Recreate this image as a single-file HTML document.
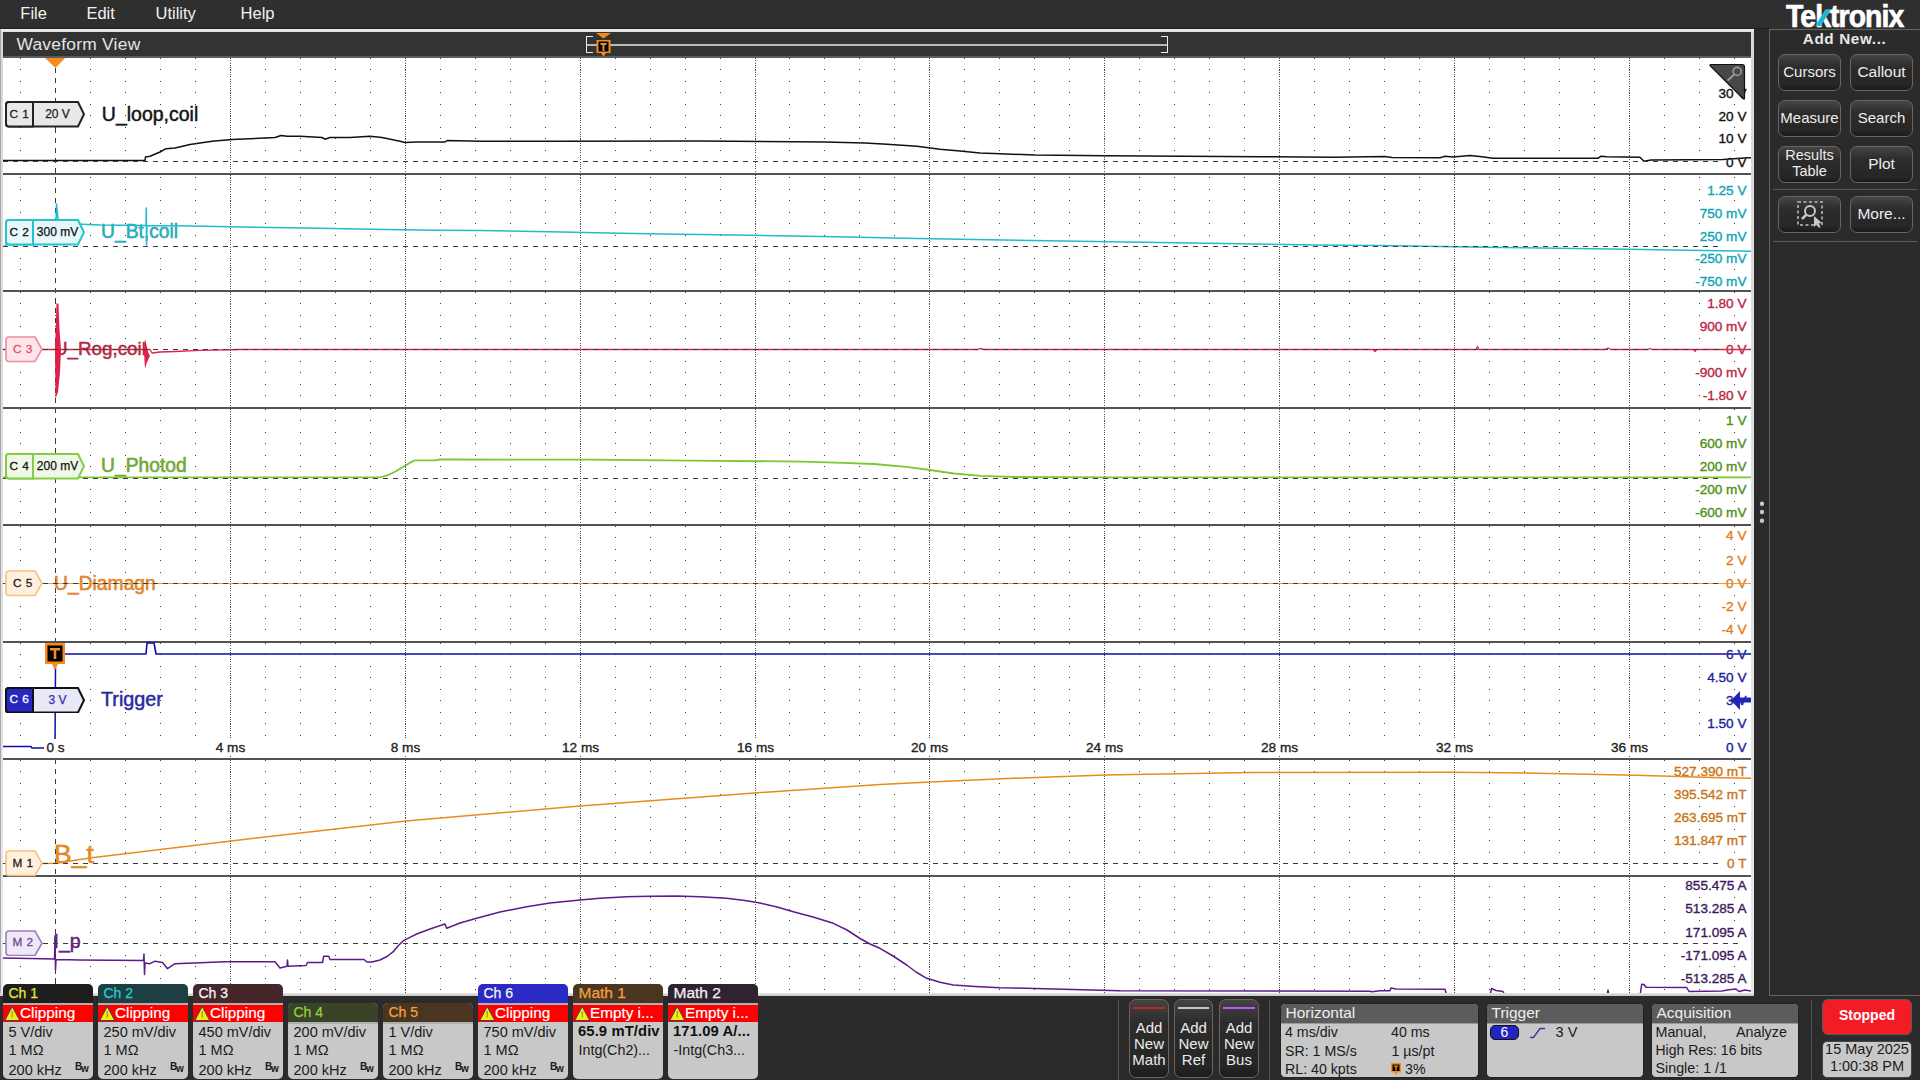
<!DOCTYPE html><html><head><meta charset="utf-8"><style>html,body{margin:0;padding:0;width:1920px;height:1080px;overflow:hidden;background:#2b2b2b;}body{position:relative;font-family:"Liberation Sans", sans-serif;}.t{position:absolute;white-space:nowrap;line-height:1;font-family:"Liberation Sans",sans-serif;}</style></head><body>
<div style="position:absolute;left:0px;top:0px;width:1920px;height:29px;background:#2f2f2f"></div>
<div style="position:absolute;left:0px;top:28px;width:1770px;height:1px;background:#1c1c1c"></div>
<div class="t" style="left:20.3px;top:5.2px;font-size:16.5px;color:#f2f2f2;font-weight:normal;">File</div>
<div class="t" style="left:86.4px;top:5.2px;font-size:16.5px;color:#f2f2f2;font-weight:normal;">Edit</div>
<div class="t" style="left:155.5px;top:5.2px;font-size:16.5px;color:#f2f2f2;font-weight:normal;">Utility</div>
<div class="t" style="left:240.6px;top:5.2px;font-size:16.5px;color:#f2f2f2;font-weight:normal;">Help</div>
<div style="position:absolute;left:0px;top:29px;width:1754px;height:967px;background:linear-gradient(#f2f2f2,#d8d8d8 4px,#e8e8e8);"></div>
<div style="position:absolute;left:0px;top:29px;width:1px;height:967px;background:#a8a8a8"></div>
<div style="position:absolute;left:3px;top:32px;width:1748px;height:24px;background:#333333"></div>
<div style="position:absolute;left:3px;top:56px;width:1748px;height:2px;background:#585d62"></div>
<div class="t" style="left:16.4px;top:35.9px;font-size:17.4px;color:#e4e4e4;font-weight:normal;letter-spacing:0.25px">Waveform View</div>
<div style="position:absolute;left:587px;top:44px;width:580px;height:2px;background:#b9b9b9"></div>
<div style="position:absolute;left:586px;top:36px;width:1px;height:17px;background:#ececec"></div>
<div style="position:absolute;left:586px;top:36px;width:7px;height:1px;background:#ececec"></div>
<div style="position:absolute;left:586px;top:52px;width:7px;height:1px;background:#ececec"></div>
<div style="position:absolute;left:1167px;top:36px;width:1px;height:17px;background:#ececec"></div>
<div style="position:absolute;left:1161px;top:36px;width:7px;height:1px;background:#ececec"></div>
<div style="position:absolute;left:1161px;top:52px;width:7px;height:1px;background:#ececec"></div>
<svg style="position:absolute;left:0;top:0" width="1920" height="60"><path d="M596 33 L611 33 L603.5 38.5 Z" fill="#f58a1f"/><path d="M596.5 40 h14 v13 h-4.5 l-2.5 3.5 l-2.5 -3.5 h-4.5 Z" fill="#f58a1f"/><rect x="598.5" y="41.5" width="10" height="10" fill="#000"/><path d="M600.5 43 h6 v2 h-2 v6 h-2 v-6 h-2 Z" fill="#f58a1f"/></svg>
<div style="position:absolute;left:3px;top:58px;width:1748px;height:935px;background:#ffffff"></div>
<div style="position:absolute;left:1754px;top:29px;width:166px;height:1051px;background:#2b2b2b"></div>
<div style="position:absolute;left:1769px;top:29px;width:151px;height:967px;border-left:1px solid #6a635c;border-top:1px solid #6a635c;border-bottom:1px solid #6a635c;box-sizing:border-box;"></div>
<svg style="position:absolute;left:1755px;top:498px" width="14" height="30"><circle cx="7" cy="5.8" r="2.2" fill="#c8c8c8"/><circle cx="7" cy="14" r="2.2" fill="#c8c8c8"/><circle cx="7" cy="22.7" r="2.2" fill="#c8c8c8"/></svg>
<div class="t" style="left:1786px;top:1.0px;font-size:31px;font-weight:bold;color:#fff;-webkit-text-stroke:0.7px #fff;letter-spacing:-1px;transform:scaleX(0.915);transform-origin:0 0">Tektronix</div>
<svg style="position:absolute;left:0;top:0" width="1920" height="30"><path d="M1815.2 26 L1820.8 26 L1830.9 9.4 L1825.2 9.4 Z" fill="#1fb5d8"/></svg>
<div class="t" style="left:1744.6px;width:200px;text-align:center;top:31.2px;font-size:15.3px;color:#e8e8e8;font-weight:bold;letter-spacing:0.6px">Add New...</div>
<div style="position:absolute;left:1778px;top:54px;width:63px;height:37px;border:1px solid #6e6459;border-radius:7px;box-sizing:border-box;background:linear-gradient(#454545,#2c2c2c 35%,#262626 85%,#1a1a1a)"></div>
<div style="position:absolute;left:1850px;top:54px;width:63px;height:37px;border:1px solid #6e6459;border-radius:7px;box-sizing:border-box;background:linear-gradient(#454545,#2c2c2c 35%,#262626 85%,#1a1a1a)"></div>
<div style="position:absolute;left:1778px;top:100px;width:63px;height:37px;border:1px solid #6e6459;border-radius:7px;box-sizing:border-box;background:linear-gradient(#454545,#2c2c2c 35%,#262626 85%,#1a1a1a)"></div>
<div style="position:absolute;left:1850px;top:100px;width:63px;height:37px;border:1px solid #6e6459;border-radius:7px;box-sizing:border-box;background:linear-gradient(#454545,#2c2c2c 35%,#262626 85%,#1a1a1a)"></div>
<div style="position:absolute;left:1778px;top:146px;width:63px;height:37px;border:1px solid #6e6459;border-radius:7px;box-sizing:border-box;background:linear-gradient(#454545,#2c2c2c 35%,#262626 85%,#1a1a1a)"></div>
<div style="position:absolute;left:1850px;top:146px;width:63px;height:37px;border:1px solid #6e6459;border-radius:7px;box-sizing:border-box;background:linear-gradient(#454545,#2c2c2c 35%,#262626 85%,#1a1a1a)"></div>
<div style="position:absolute;left:1778px;top:196px;width:63px;height:37px;border:1px solid #6e6459;border-radius:7px;box-sizing:border-box;background:linear-gradient(#454545,#2c2c2c 35%,#262626 85%,#1a1a1a)"></div>
<div style="position:absolute;left:1850px;top:196px;width:63px;height:37px;border:1px solid #6e6459;border-radius:7px;box-sizing:border-box;background:linear-gradient(#454545,#2c2c2c 35%,#262626 85%,#1a1a1a)"></div>
<div class="t" style="left:1709.5px;width:200px;text-align:center;top:64.3px;font-size:15px;color:#ededed;font-weight:normal;">Cursors</div>
<div class="t" style="left:1781.5px;width:200px;text-align:center;top:63.9px;font-size:15.5px;color:#ededed;font-weight:normal;">Callout</div>
<div class="t" style="left:1709.5px;width:200px;text-align:center;top:110.3px;font-size:15px;color:#ededed;font-weight:normal;">Measure</div>
<div class="t" style="left:1781.5px;width:200px;text-align:center;top:110.3px;font-size:15px;color:#ededed;font-weight:normal;">Search</div>
<div class="t" style="left:1709.5px;width:200px;text-align:center;top:147.7px;font-size:14.5px;color:#ededed;font-weight:normal;">Results</div>
<div class="t" style="left:1709.5px;width:200px;text-align:center;top:164.0px;font-size:14.5px;color:#ededed;font-weight:normal;">Table</div>
<div class="t" style="left:1781.5px;width:200px;text-align:center;top:155.7px;font-size:15.5px;color:#ededed;font-weight:normal;">Plot</div>
<div class="t" style="left:1781.5px;width:200px;text-align:center;top:205.7px;font-size:15.5px;color:#ededed;font-weight:normal;">More...</div>
<div style="position:absolute;left:1773px;top:189px;width:144px;height:1px;background:#5e5850"></div>
<div style="position:absolute;left:1773px;top:241px;width:144px;height:1px;background:#5e5850"></div>
<svg style="position:absolute;left:1795px;top:199px" width="32" height="30"><rect x="3" y="3" width="24" height="23" fill="none" stroke="#9a9a9a" stroke-width="2" stroke-dasharray="3 2.5"/><circle cx="15" cy="12" r="5" fill="none" stroke="#c8c8c8" stroke-width="2"/><path d="M11.5 15.5 L7 20" stroke="#c8c8c8" stroke-width="2.5"/><path d="M19 17 L19 28 L21.5 25.5 L24 29 L25.5 28 L23.5 24.5 L27 24 Z" fill="#c8c8c8"/></svg>
<svg style="position:absolute;left:0;top:0" width="1920" height="1080">
<path d="M20 58.5h1M55 58.5h1M90 58.5h1M125 58.5h1M160 58.5h1M195 58.5h1M230 58.5h1M265 58.5h1M300 58.5h1M335 58.5h1M370 58.5h1M405 58.5h1M440 58.5h1M475 58.5h1M510 58.5h1M545 58.5h1M580 58.5h1M615 58.5h1M650 58.5h1M685 58.5h1M720 58.5h1M755 58.5h1M789 58.5h1M824 58.5h1M859 58.5h1M894 58.5h1M929 58.5h1M964 58.5h1M999 58.5h1M1034 58.5h1M1069 58.5h1M1104 58.5h1M1139 58.5h1M1174 58.5h1M1209 58.5h1M1244 58.5h1M1279 58.5h1M1314 58.5h1M1349 58.5h1M1384 58.5h1M1419 58.5h1M1454 58.5h1M1489 58.5h1M1524 58.5h1M1559 58.5h1M1594 58.5h1M1629 58.5h1M1664 58.5h1M1699 58.5h1M1734 58.5h1M20 69.5h1M55 69.5h1M90 69.5h1M125 69.5h1M160 69.5h1M195 69.5h1M230 69.5h1M265 69.5h1M300 69.5h1M335 69.5h1M370 69.5h1M405 69.5h1M440 69.5h1M475 69.5h1M510 69.5h1M545 69.5h1M580 69.5h1M615 69.5h1M650 69.5h1M685 69.5h1M720 69.5h1M755 69.5h1M789 69.5h1M824 69.5h1M859 69.5h1M894 69.5h1M929 69.5h1M964 69.5h1M999 69.5h1M1034 69.5h1M1069 69.5h1M1104 69.5h1M1139 69.5h1M1174 69.5h1M1209 69.5h1M1244 69.5h1M1279 69.5h1M1314 69.5h1M1349 69.5h1M1384 69.5h1M1419 69.5h1M1454 69.5h1M1489 69.5h1M1524 69.5h1M1559 69.5h1M1594 69.5h1M1629 69.5h1M1664 69.5h1M1699 69.5h1M1734 69.5h1M20 81.5h1M55 81.5h1M90 81.5h1M125 81.5h1M160 81.5h1M195 81.5h1M230 81.5h1M265 81.5h1M300 81.5h1M335 81.5h1M370 81.5h1M405 81.5h1M440 81.5h1M475 81.5h1M510 81.5h1M545 81.5h1M580 81.5h1M615 81.5h1M650 81.5h1M685 81.5h1M720 81.5h1M755 81.5h1M789 81.5h1M824 81.5h1M859 81.5h1M894 81.5h1M929 81.5h1M964 81.5h1M999 81.5h1M1034 81.5h1M1069 81.5h1M1104 81.5h1M1139 81.5h1M1174 81.5h1M1209 81.5h1M1244 81.5h1M1279 81.5h1M1314 81.5h1M1349 81.5h1M1384 81.5h1M1419 81.5h1M1454 81.5h1M1489 81.5h1M1524 81.5h1M1559 81.5h1M1594 81.5h1M1629 81.5h1M1664 81.5h1M1699 81.5h1M1734 81.5h1M20 92.5h1M55 92.5h1M90 92.5h1M125 92.5h1M160 92.5h1M195 92.5h1M230 92.5h1M265 92.5h1M300 92.5h1M335 92.5h1M370 92.5h1M405 92.5h1M440 92.5h1M475 92.5h1M510 92.5h1M545 92.5h1M580 92.5h1M615 92.5h1M650 92.5h1M685 92.5h1M720 92.5h1M755 92.5h1M789 92.5h1M824 92.5h1M859 92.5h1M894 92.5h1M929 92.5h1M964 92.5h1M999 92.5h1M1034 92.5h1M1069 92.5h1M1104 92.5h1M1139 92.5h1M1174 92.5h1M1209 92.5h1M1244 92.5h1M1279 92.5h1M1314 92.5h1M1349 92.5h1M1384 92.5h1M1419 92.5h1M1454 92.5h1M1489 92.5h1M1524 92.5h1M1559 92.5h1M1594 92.5h1M1629 92.5h1M1664 92.5h1M1699 92.5h1M20 104.5h1M55 104.5h1M90 104.5h1M125 104.5h1M160 104.5h1M195 104.5h1M230 104.5h1M265 104.5h1M300 104.5h1M335 104.5h1M370 104.5h1M405 104.5h1M440 104.5h1M475 104.5h1M510 104.5h1M545 104.5h1M580 104.5h1M615 104.5h1M650 104.5h1M685 104.5h1M720 104.5h1M755 104.5h1M789 104.5h1M824 104.5h1M859 104.5h1M894 104.5h1M929 104.5h1M964 104.5h1M999 104.5h1M1034 104.5h1M1069 104.5h1M1104 104.5h1M1139 104.5h1M1174 104.5h1M1209 104.5h1M1244 104.5h1M1279 104.5h1M1314 104.5h1M1349 104.5h1M1384 104.5h1M1419 104.5h1M1454 104.5h1M1489 104.5h1M1524 104.5h1M1559 104.5h1M1594 104.5h1M1629 104.5h1M1664 104.5h1M1699 104.5h1M1734 104.5h1M20 115.5h1M55 115.5h1M90 115.5h1M125 115.5h1M160 115.5h1M195 115.5h1M230 115.5h1M265 115.5h1M300 115.5h1M335 115.5h1M370 115.5h1M405 115.5h1M440 115.5h1M475 115.5h1M510 115.5h1M545 115.5h1M580 115.5h1M615 115.5h1M650 115.5h1M685 115.5h1M720 115.5h1M755 115.5h1M789 115.5h1M824 115.5h1M859 115.5h1M894 115.5h1M929 115.5h1M964 115.5h1M999 115.5h1M1034 115.5h1M1069 115.5h1M1104 115.5h1M1139 115.5h1M1174 115.5h1M1209 115.5h1M1244 115.5h1M1279 115.5h1M1314 115.5h1M1349 115.5h1M1384 115.5h1M1419 115.5h1M1454 115.5h1M1489 115.5h1M1524 115.5h1M1559 115.5h1M1594 115.5h1M1629 115.5h1M1664 115.5h1M1699 115.5h1M20 127.5h1M55 127.5h1M90 127.5h1M125 127.5h1M160 127.5h1M195 127.5h1M230 127.5h1M265 127.5h1M300 127.5h1M335 127.5h1M370 127.5h1M405 127.5h1M440 127.5h1M475 127.5h1M510 127.5h1M545 127.5h1M580 127.5h1M615 127.5h1M650 127.5h1M685 127.5h1M720 127.5h1M755 127.5h1M789 127.5h1M824 127.5h1M859 127.5h1M894 127.5h1M929 127.5h1M964 127.5h1M999 127.5h1M1034 127.5h1M1069 127.5h1M1104 127.5h1M1139 127.5h1M1174 127.5h1M1209 127.5h1M1244 127.5h1M1279 127.5h1M1314 127.5h1M1349 127.5h1M1384 127.5h1M1419 127.5h1M1454 127.5h1M1489 127.5h1M1524 127.5h1M1559 127.5h1M1594 127.5h1M1629 127.5h1M1664 127.5h1M1699 127.5h1M1734 127.5h1M20 138.5h1M55 138.5h1M90 138.5h1M125 138.5h1M160 138.5h1M195 138.5h1M230 138.5h1M265 138.5h1M300 138.5h1M335 138.5h1M370 138.5h1M405 138.5h1M440 138.5h1M475 138.5h1M510 138.5h1M545 138.5h1M580 138.5h1M615 138.5h1M650 138.5h1M685 138.5h1M720 138.5h1M755 138.5h1M789 138.5h1M824 138.5h1M859 138.5h1M894 138.5h1M929 138.5h1M964 138.5h1M999 138.5h1M1034 138.5h1M1069 138.5h1M1104 138.5h1M1139 138.5h1M1174 138.5h1M1209 138.5h1M1244 138.5h1M1279 138.5h1M1314 138.5h1M1349 138.5h1M1384 138.5h1M1419 138.5h1M1454 138.5h1M1489 138.5h1M1524 138.5h1M1559 138.5h1M1594 138.5h1M1629 138.5h1M1664 138.5h1M1699 138.5h1M20 150.5h1M55 150.5h1M90 150.5h1M125 150.5h1M160 150.5h1M195 150.5h1M230 150.5h1M265 150.5h1M300 150.5h1M335 150.5h1M370 150.5h1M405 150.5h1M440 150.5h1M475 150.5h1M510 150.5h1M545 150.5h1M580 150.5h1M615 150.5h1M650 150.5h1M685 150.5h1M720 150.5h1M755 150.5h1M789 150.5h1M824 150.5h1M859 150.5h1M894 150.5h1M929 150.5h1M964 150.5h1M999 150.5h1M1034 150.5h1M1069 150.5h1M1104 150.5h1M1139 150.5h1M1174 150.5h1M1209 150.5h1M1244 150.5h1M1279 150.5h1M1314 150.5h1M1349 150.5h1M1384 150.5h1M1419 150.5h1M1454 150.5h1M1489 150.5h1M1524 150.5h1M1559 150.5h1M1594 150.5h1M1629 150.5h1M1664 150.5h1M1699 150.5h1M1734 150.5h1M20 177.5h1M55 177.5h1M90 177.5h1M125 177.5h1M160 177.5h1M195 177.5h1M230 177.5h1M265 177.5h1M300 177.5h1M335 177.5h1M370 177.5h1M405 177.5h1M440 177.5h1M475 177.5h1M510 177.5h1M545 177.5h1M580 177.5h1M615 177.5h1M650 177.5h1M685 177.5h1M720 177.5h1M755 177.5h1M789 177.5h1M824 177.5h1M859 177.5h1M894 177.5h1M929 177.5h1M964 177.5h1M999 177.5h1M1034 177.5h1M1069 177.5h1M1104 177.5h1M1139 177.5h1M1174 177.5h1M1209 177.5h1M1244 177.5h1M1279 177.5h1M1314 177.5h1M1349 177.5h1M1384 177.5h1M1419 177.5h1M1454 177.5h1M1489 177.5h1M1524 177.5h1M1559 177.5h1M1594 177.5h1M1629 177.5h1M1664 177.5h1M1699 177.5h1M1734 177.5h1M20 189.5h1M55 189.5h1M90 189.5h1M125 189.5h1M160 189.5h1M195 189.5h1M230 189.5h1M265 189.5h1M300 189.5h1M335 189.5h1M370 189.5h1M405 189.5h1M440 189.5h1M475 189.5h1M510 189.5h1M545 189.5h1M580 189.5h1M615 189.5h1M650 189.5h1M685 189.5h1M720 189.5h1M755 189.5h1M789 189.5h1M824 189.5h1M859 189.5h1M894 189.5h1M929 189.5h1M964 189.5h1M999 189.5h1M1034 189.5h1M1069 189.5h1M1104 189.5h1M1139 189.5h1M1174 189.5h1M1209 189.5h1M1244 189.5h1M1279 189.5h1M1314 189.5h1M1349 189.5h1M1384 189.5h1M1419 189.5h1M1454 189.5h1M1489 189.5h1M1524 189.5h1M1559 189.5h1M1594 189.5h1M1629 189.5h1M1664 189.5h1M1699 189.5h1M20 200.5h1M55 200.5h1M90 200.5h1M125 200.5h1M160 200.5h1M195 200.5h1M230 200.5h1M265 200.5h1M300 200.5h1M335 200.5h1M370 200.5h1M405 200.5h1M440 200.5h1M475 200.5h1M510 200.5h1M545 200.5h1M580 200.5h1M615 200.5h1M650 200.5h1M685 200.5h1M720 200.5h1M755 200.5h1M789 200.5h1M824 200.5h1M859 200.5h1M894 200.5h1M929 200.5h1M964 200.5h1M999 200.5h1M1034 200.5h1M1069 200.5h1M1104 200.5h1M1139 200.5h1M1174 200.5h1M1209 200.5h1M1244 200.5h1M1279 200.5h1M1314 200.5h1M1349 200.5h1M1384 200.5h1M1419 200.5h1M1454 200.5h1M1489 200.5h1M1524 200.5h1M1559 200.5h1M1594 200.5h1M1629 200.5h1M1664 200.5h1M1699 200.5h1M1734 200.5h1M20 212.5h1M55 212.5h1M90 212.5h1M125 212.5h1M160 212.5h1M195 212.5h1M230 212.5h1M265 212.5h1M300 212.5h1M335 212.5h1M370 212.5h1M405 212.5h1M440 212.5h1M475 212.5h1M510 212.5h1M545 212.5h1M580 212.5h1M615 212.5h1M650 212.5h1M685 212.5h1M720 212.5h1M755 212.5h1M789 212.5h1M824 212.5h1M859 212.5h1M894 212.5h1M929 212.5h1M964 212.5h1M999 212.5h1M1034 212.5h1M1069 212.5h1M1104 212.5h1M1139 212.5h1M1174 212.5h1M1209 212.5h1M1244 212.5h1M1279 212.5h1M1314 212.5h1M1349 212.5h1M1384 212.5h1M1419 212.5h1M1454 212.5h1M1489 212.5h1M1524 212.5h1M1559 212.5h1M1594 212.5h1M1629 212.5h1M1664 212.5h1M20 223.5h1M55 223.5h1M90 223.5h1M125 223.5h1M160 223.5h1M195 223.5h1M230 223.5h1M265 223.5h1M300 223.5h1M335 223.5h1M370 223.5h1M405 223.5h1M440 223.5h1M475 223.5h1M510 223.5h1M545 223.5h1M580 223.5h1M615 223.5h1M650 223.5h1M685 223.5h1M720 223.5h1M755 223.5h1M789 223.5h1M824 223.5h1M859 223.5h1M894 223.5h1M929 223.5h1M964 223.5h1M999 223.5h1M1034 223.5h1M1069 223.5h1M1104 223.5h1M1139 223.5h1M1174 223.5h1M1209 223.5h1M1244 223.5h1M1279 223.5h1M1314 223.5h1M1349 223.5h1M1384 223.5h1M1419 223.5h1M1454 223.5h1M1489 223.5h1M1524 223.5h1M1559 223.5h1M1594 223.5h1M1629 223.5h1M1664 223.5h1M1699 223.5h1M1734 223.5h1M20 235.5h1M55 235.5h1M90 235.5h1M125 235.5h1M160 235.5h1M195 235.5h1M230 235.5h1M265 235.5h1M300 235.5h1M335 235.5h1M370 235.5h1M405 235.5h1M440 235.5h1M475 235.5h1M510 235.5h1M545 235.5h1M580 235.5h1M615 235.5h1M650 235.5h1M685 235.5h1M720 235.5h1M755 235.5h1M789 235.5h1M824 235.5h1M859 235.5h1M894 235.5h1M929 235.5h1M964 235.5h1M999 235.5h1M1034 235.5h1M1069 235.5h1M1104 235.5h1M1139 235.5h1M1174 235.5h1M1209 235.5h1M1244 235.5h1M1279 235.5h1M1314 235.5h1M1349 235.5h1M1384 235.5h1M1419 235.5h1M1454 235.5h1M1489 235.5h1M1524 235.5h1M1559 235.5h1M1594 235.5h1M1629 235.5h1M1664 235.5h1M20 258.5h1M55 258.5h1M90 258.5h1M125 258.5h1M160 258.5h1M195 258.5h1M230 258.5h1M265 258.5h1M300 258.5h1M335 258.5h1M370 258.5h1M405 258.5h1M440 258.5h1M475 258.5h1M510 258.5h1M545 258.5h1M580 258.5h1M615 258.5h1M650 258.5h1M685 258.5h1M720 258.5h1M755 258.5h1M789 258.5h1M824 258.5h1M859 258.5h1M894 258.5h1M929 258.5h1M964 258.5h1M999 258.5h1M1034 258.5h1M1069 258.5h1M1104 258.5h1M1139 258.5h1M1174 258.5h1M1209 258.5h1M1244 258.5h1M1279 258.5h1M1314 258.5h1M1349 258.5h1M1384 258.5h1M1419 258.5h1M1454 258.5h1M1489 258.5h1M1524 258.5h1M1559 258.5h1M1594 258.5h1M1629 258.5h1M1664 258.5h1M20 269.5h1M55 269.5h1M90 269.5h1M125 269.5h1M160 269.5h1M195 269.5h1M230 269.5h1M265 269.5h1M300 269.5h1M335 269.5h1M370 269.5h1M405 269.5h1M440 269.5h1M475 269.5h1M510 269.5h1M545 269.5h1M580 269.5h1M615 269.5h1M650 269.5h1M685 269.5h1M720 269.5h1M755 269.5h1M789 269.5h1M824 269.5h1M859 269.5h1M894 269.5h1M929 269.5h1M964 269.5h1M999 269.5h1M1034 269.5h1M1069 269.5h1M1104 269.5h1M1139 269.5h1M1174 269.5h1M1209 269.5h1M1244 269.5h1M1279 269.5h1M1314 269.5h1M1349 269.5h1M1384 269.5h1M1419 269.5h1M1454 269.5h1M1489 269.5h1M1524 269.5h1M1559 269.5h1M1594 269.5h1M1629 269.5h1M1664 269.5h1M1699 269.5h1M1734 269.5h1M20 281.5h1M55 281.5h1M90 281.5h1M125 281.5h1M160 281.5h1M195 281.5h1M230 281.5h1M265 281.5h1M300 281.5h1M335 281.5h1M370 281.5h1M405 281.5h1M440 281.5h1M475 281.5h1M510 281.5h1M545 281.5h1M580 281.5h1M615 281.5h1M650 281.5h1M685 281.5h1M720 281.5h1M755 281.5h1M789 281.5h1M824 281.5h1M859 281.5h1M894 281.5h1M929 281.5h1M964 281.5h1M999 281.5h1M1034 281.5h1M1069 281.5h1M1104 281.5h1M1139 281.5h1M1174 281.5h1M1209 281.5h1M1244 281.5h1M1279 281.5h1M1314 281.5h1M1349 281.5h1M1384 281.5h1M1419 281.5h1M1454 281.5h1M1489 281.5h1M1524 281.5h1M1559 281.5h1M1594 281.5h1M1629 281.5h1M1664 281.5h1M20 292.5h1M55 292.5h1M90 292.5h1M125 292.5h1M160 292.5h1M195 292.5h1M230 292.5h1M265 292.5h1M300 292.5h1M335 292.5h1M370 292.5h1M405 292.5h1M440 292.5h1M475 292.5h1M510 292.5h1M545 292.5h1M580 292.5h1M615 292.5h1M650 292.5h1M685 292.5h1M720 292.5h1M755 292.5h1M789 292.5h1M824 292.5h1M859 292.5h1M894 292.5h1M929 292.5h1M964 292.5h1M999 292.5h1M1034 292.5h1M1069 292.5h1M1104 292.5h1M1139 292.5h1M1174 292.5h1M1209 292.5h1M1244 292.5h1M1279 292.5h1M1314 292.5h1M1349 292.5h1M1384 292.5h1M1419 292.5h1M1454 292.5h1M1489 292.5h1M1524 292.5h1M1559 292.5h1M1594 292.5h1M1629 292.5h1M1664 292.5h1M1699 292.5h1M1734 292.5h1M20 303.5h1M55 303.5h1M90 303.5h1M125 303.5h1M160 303.5h1M195 303.5h1M230 303.5h1M265 303.5h1M300 303.5h1M335 303.5h1M370 303.5h1M405 303.5h1M440 303.5h1M475 303.5h1M510 303.5h1M545 303.5h1M580 303.5h1M615 303.5h1M650 303.5h1M685 303.5h1M720 303.5h1M755 303.5h1M789 303.5h1M824 303.5h1M859 303.5h1M894 303.5h1M929 303.5h1M964 303.5h1M999 303.5h1M1034 303.5h1M1069 303.5h1M1104 303.5h1M1139 303.5h1M1174 303.5h1M1209 303.5h1M1244 303.5h1M1279 303.5h1M1314 303.5h1M1349 303.5h1M1384 303.5h1M1419 303.5h1M1454 303.5h1M1489 303.5h1M1524 303.5h1M1559 303.5h1M1594 303.5h1M1629 303.5h1M1664 303.5h1M1699 303.5h1M20 315.5h1M55 315.5h1M90 315.5h1M125 315.5h1M160 315.5h1M195 315.5h1M230 315.5h1M265 315.5h1M300 315.5h1M335 315.5h1M370 315.5h1M405 315.5h1M440 315.5h1M475 315.5h1M510 315.5h1M545 315.5h1M580 315.5h1M615 315.5h1M650 315.5h1M685 315.5h1M720 315.5h1M755 315.5h1M789 315.5h1M824 315.5h1M859 315.5h1M894 315.5h1M929 315.5h1M964 315.5h1M999 315.5h1M1034 315.5h1M1069 315.5h1M1104 315.5h1M1139 315.5h1M1174 315.5h1M1209 315.5h1M1244 315.5h1M1279 315.5h1M1314 315.5h1M1349 315.5h1M1384 315.5h1M1419 315.5h1M1454 315.5h1M1489 315.5h1M1524 315.5h1M1559 315.5h1M1594 315.5h1M1629 315.5h1M1664 315.5h1M1699 315.5h1M1734 315.5h1M20 326.5h1M55 326.5h1M90 326.5h1M125 326.5h1M160 326.5h1M195 326.5h1M230 326.5h1M265 326.5h1M300 326.5h1M335 326.5h1M370 326.5h1M405 326.5h1M440 326.5h1M475 326.5h1M510 326.5h1M545 326.5h1M580 326.5h1M615 326.5h1M650 326.5h1M685 326.5h1M720 326.5h1M755 326.5h1M789 326.5h1M824 326.5h1M859 326.5h1M894 326.5h1M929 326.5h1M964 326.5h1M999 326.5h1M1034 326.5h1M1069 326.5h1M1104 326.5h1M1139 326.5h1M1174 326.5h1M1209 326.5h1M1244 326.5h1M1279 326.5h1M1314 326.5h1M1349 326.5h1M1384 326.5h1M1419 326.5h1M1454 326.5h1M1489 326.5h1M1524 326.5h1M1559 326.5h1M1594 326.5h1M1629 326.5h1M1664 326.5h1M20 338.5h1M55 338.5h1M90 338.5h1M125 338.5h1M160 338.5h1M195 338.5h1M230 338.5h1M265 338.5h1M300 338.5h1M335 338.5h1M370 338.5h1M405 338.5h1M440 338.5h1M475 338.5h1M510 338.5h1M545 338.5h1M580 338.5h1M615 338.5h1M650 338.5h1M685 338.5h1M720 338.5h1M755 338.5h1M789 338.5h1M824 338.5h1M859 338.5h1M894 338.5h1M929 338.5h1M964 338.5h1M999 338.5h1M1034 338.5h1M1069 338.5h1M1104 338.5h1M1139 338.5h1M1174 338.5h1M1209 338.5h1M1244 338.5h1M1279 338.5h1M1314 338.5h1M1349 338.5h1M1384 338.5h1M1419 338.5h1M1454 338.5h1M1489 338.5h1M1524 338.5h1M1559 338.5h1M1594 338.5h1M1629 338.5h1M1664 338.5h1M1699 338.5h1M1734 338.5h1M20 361.5h1M55 361.5h1M90 361.5h1M125 361.5h1M160 361.5h1M195 361.5h1M230 361.5h1M265 361.5h1M300 361.5h1M335 361.5h1M370 361.5h1M405 361.5h1M440 361.5h1M475 361.5h1M510 361.5h1M545 361.5h1M580 361.5h1M615 361.5h1M650 361.5h1M685 361.5h1M720 361.5h1M755 361.5h1M789 361.5h1M824 361.5h1M859 361.5h1M894 361.5h1M929 361.5h1M964 361.5h1M999 361.5h1M1034 361.5h1M1069 361.5h1M1104 361.5h1M1139 361.5h1M1174 361.5h1M1209 361.5h1M1244 361.5h1M1279 361.5h1M1314 361.5h1M1349 361.5h1M1384 361.5h1M1419 361.5h1M1454 361.5h1M1489 361.5h1M1524 361.5h1M1559 361.5h1M1594 361.5h1M1629 361.5h1M1664 361.5h1M1699 361.5h1M1734 361.5h1M20 372.5h1M55 372.5h1M90 372.5h1M125 372.5h1M160 372.5h1M195 372.5h1M230 372.5h1M265 372.5h1M300 372.5h1M335 372.5h1M370 372.5h1M405 372.5h1M440 372.5h1M475 372.5h1M510 372.5h1M545 372.5h1M580 372.5h1M615 372.5h1M650 372.5h1M685 372.5h1M720 372.5h1M755 372.5h1M789 372.5h1M824 372.5h1M859 372.5h1M894 372.5h1M929 372.5h1M964 372.5h1M999 372.5h1M1034 372.5h1M1069 372.5h1M1104 372.5h1M1139 372.5h1M1174 372.5h1M1209 372.5h1M1244 372.5h1M1279 372.5h1M1314 372.5h1M1349 372.5h1M1384 372.5h1M1419 372.5h1M1454 372.5h1M1489 372.5h1M1524 372.5h1M1559 372.5h1M1594 372.5h1M1629 372.5h1M1664 372.5h1M20 384.5h1M55 384.5h1M90 384.5h1M125 384.5h1M160 384.5h1M195 384.5h1M230 384.5h1M265 384.5h1M300 384.5h1M335 384.5h1M370 384.5h1M405 384.5h1M440 384.5h1M475 384.5h1M510 384.5h1M545 384.5h1M580 384.5h1M615 384.5h1M650 384.5h1M685 384.5h1M720 384.5h1M755 384.5h1M789 384.5h1M824 384.5h1M859 384.5h1M894 384.5h1M929 384.5h1M964 384.5h1M999 384.5h1M1034 384.5h1M1069 384.5h1M1104 384.5h1M1139 384.5h1M1174 384.5h1M1209 384.5h1M1244 384.5h1M1279 384.5h1M1314 384.5h1M1349 384.5h1M1384 384.5h1M1419 384.5h1M1454 384.5h1M1489 384.5h1M1524 384.5h1M1559 384.5h1M1594 384.5h1M1629 384.5h1M1664 384.5h1M1699 384.5h1M1734 384.5h1M20 395.5h1M55 395.5h1M90 395.5h1M125 395.5h1M160 395.5h1M195 395.5h1M230 395.5h1M265 395.5h1M300 395.5h1M335 395.5h1M370 395.5h1M405 395.5h1M440 395.5h1M475 395.5h1M510 395.5h1M545 395.5h1M580 395.5h1M615 395.5h1M650 395.5h1M685 395.5h1M720 395.5h1M755 395.5h1M789 395.5h1M824 395.5h1M859 395.5h1M894 395.5h1M929 395.5h1M964 395.5h1M999 395.5h1M1034 395.5h1M1069 395.5h1M1104 395.5h1M1139 395.5h1M1174 395.5h1M1209 395.5h1M1244 395.5h1M1279 395.5h1M1314 395.5h1M1349 395.5h1M1384 395.5h1M1419 395.5h1M1454 395.5h1M1489 395.5h1M1524 395.5h1M1559 395.5h1M1594 395.5h1M1629 395.5h1M1664 395.5h1M1699 395.5h1M20 409.5h1M55 409.5h1M90 409.5h1M125 409.5h1M160 409.5h1M195 409.5h1M230 409.5h1M265 409.5h1M300 409.5h1M335 409.5h1M370 409.5h1M405 409.5h1M440 409.5h1M475 409.5h1M510 409.5h1M545 409.5h1M580 409.5h1M615 409.5h1M650 409.5h1M685 409.5h1M720 409.5h1M755 409.5h1M789 409.5h1M824 409.5h1M859 409.5h1M894 409.5h1M929 409.5h1M964 409.5h1M999 409.5h1M1034 409.5h1M1069 409.5h1M1104 409.5h1M1139 409.5h1M1174 409.5h1M1209 409.5h1M1244 409.5h1M1279 409.5h1M1314 409.5h1M1349 409.5h1M1384 409.5h1M1419 409.5h1M1454 409.5h1M1489 409.5h1M1524 409.5h1M1559 409.5h1M1594 409.5h1M1629 409.5h1M1664 409.5h1M1699 409.5h1M1734 409.5h1M20 420.5h1M55 420.5h1M90 420.5h1M125 420.5h1M160 420.5h1M195 420.5h1M230 420.5h1M265 420.5h1M300 420.5h1M335 420.5h1M370 420.5h1M405 420.5h1M440 420.5h1M475 420.5h1M510 420.5h1M545 420.5h1M580 420.5h1M615 420.5h1M650 420.5h1M685 420.5h1M720 420.5h1M755 420.5h1M789 420.5h1M824 420.5h1M859 420.5h1M894 420.5h1M929 420.5h1M964 420.5h1M999 420.5h1M1034 420.5h1M1069 420.5h1M1104 420.5h1M1139 420.5h1M1174 420.5h1M1209 420.5h1M1244 420.5h1M1279 420.5h1M1314 420.5h1M1349 420.5h1M1384 420.5h1M1419 420.5h1M1454 420.5h1M1489 420.5h1M1524 420.5h1M1559 420.5h1M1594 420.5h1M1629 420.5h1M1664 420.5h1M1699 420.5h1M20 432.5h1M55 432.5h1M90 432.5h1M125 432.5h1M160 432.5h1M195 432.5h1M230 432.5h1M265 432.5h1M300 432.5h1M335 432.5h1M370 432.5h1M405 432.5h1M440 432.5h1M475 432.5h1M510 432.5h1M545 432.5h1M580 432.5h1M615 432.5h1M650 432.5h1M685 432.5h1M720 432.5h1M755 432.5h1M789 432.5h1M824 432.5h1M859 432.5h1M894 432.5h1M929 432.5h1M964 432.5h1M999 432.5h1M1034 432.5h1M1069 432.5h1M1104 432.5h1M1139 432.5h1M1174 432.5h1M1209 432.5h1M1244 432.5h1M1279 432.5h1M1314 432.5h1M1349 432.5h1M1384 432.5h1M1419 432.5h1M1454 432.5h1M1489 432.5h1M1524 432.5h1M1559 432.5h1M1594 432.5h1M1629 432.5h1M1664 432.5h1M1699 432.5h1M1734 432.5h1M20 443.5h1M55 443.5h1M90 443.5h1M125 443.5h1M160 443.5h1M195 443.5h1M230 443.5h1M265 443.5h1M300 443.5h1M335 443.5h1M370 443.5h1M405 443.5h1M440 443.5h1M475 443.5h1M510 443.5h1M545 443.5h1M580 443.5h1M615 443.5h1M650 443.5h1M685 443.5h1M720 443.5h1M755 443.5h1M789 443.5h1M824 443.5h1M859 443.5h1M894 443.5h1M929 443.5h1M964 443.5h1M999 443.5h1M1034 443.5h1M1069 443.5h1M1104 443.5h1M1139 443.5h1M1174 443.5h1M1209 443.5h1M1244 443.5h1M1279 443.5h1M1314 443.5h1M1349 443.5h1M1384 443.5h1M1419 443.5h1M1454 443.5h1M1489 443.5h1M1524 443.5h1M1559 443.5h1M1594 443.5h1M1629 443.5h1M1664 443.5h1M20 455.5h1M55 455.5h1M90 455.5h1M125 455.5h1M160 455.5h1M195 455.5h1M230 455.5h1M265 455.5h1M300 455.5h1M335 455.5h1M370 455.5h1M405 455.5h1M440 455.5h1M475 455.5h1M510 455.5h1M545 455.5h1M580 455.5h1M615 455.5h1M650 455.5h1M685 455.5h1M720 455.5h1M755 455.5h1M789 455.5h1M824 455.5h1M859 455.5h1M894 455.5h1M929 455.5h1M964 455.5h1M999 455.5h1M1034 455.5h1M1069 455.5h1M1104 455.5h1M1139 455.5h1M1174 455.5h1M1209 455.5h1M1244 455.5h1M1279 455.5h1M1314 455.5h1M1349 455.5h1M1384 455.5h1M1419 455.5h1M1454 455.5h1M1489 455.5h1M1524 455.5h1M1559 455.5h1M1594 455.5h1M1629 455.5h1M1664 455.5h1M1699 455.5h1M1734 455.5h1M20 466.5h1M55 466.5h1M90 466.5h1M125 466.5h1M160 466.5h1M195 466.5h1M230 466.5h1M265 466.5h1M300 466.5h1M335 466.5h1M370 466.5h1M405 466.5h1M440 466.5h1M475 466.5h1M510 466.5h1M545 466.5h1M580 466.5h1M615 466.5h1M650 466.5h1M685 466.5h1M720 466.5h1M755 466.5h1M789 466.5h1M824 466.5h1M859 466.5h1M894 466.5h1M929 466.5h1M964 466.5h1M999 466.5h1M1034 466.5h1M1069 466.5h1M1104 466.5h1M1139 466.5h1M1174 466.5h1M1209 466.5h1M1244 466.5h1M1279 466.5h1M1314 466.5h1M1349 466.5h1M1384 466.5h1M1419 466.5h1M1454 466.5h1M1489 466.5h1M1524 466.5h1M1559 466.5h1M1594 466.5h1M1629 466.5h1M1664 466.5h1M20 489.5h1M55 489.5h1M90 489.5h1M125 489.5h1M160 489.5h1M195 489.5h1M230 489.5h1M265 489.5h1M300 489.5h1M335 489.5h1M370 489.5h1M405 489.5h1M440 489.5h1M475 489.5h1M510 489.5h1M545 489.5h1M580 489.5h1M615 489.5h1M650 489.5h1M685 489.5h1M720 489.5h1M755 489.5h1M789 489.5h1M824 489.5h1M859 489.5h1M894 489.5h1M929 489.5h1M964 489.5h1M999 489.5h1M1034 489.5h1M1069 489.5h1M1104 489.5h1M1139 489.5h1M1174 489.5h1M1209 489.5h1M1244 489.5h1M1279 489.5h1M1314 489.5h1M1349 489.5h1M1384 489.5h1M1419 489.5h1M1454 489.5h1M1489 489.5h1M1524 489.5h1M1559 489.5h1M1594 489.5h1M1629 489.5h1M1664 489.5h1M20 501.5h1M55 501.5h1M90 501.5h1M125 501.5h1M160 501.5h1M195 501.5h1M230 501.5h1M265 501.5h1M300 501.5h1M335 501.5h1M370 501.5h1M405 501.5h1M440 501.5h1M475 501.5h1M510 501.5h1M545 501.5h1M580 501.5h1M615 501.5h1M650 501.5h1M685 501.5h1M720 501.5h1M755 501.5h1M789 501.5h1M824 501.5h1M859 501.5h1M894 501.5h1M929 501.5h1M964 501.5h1M999 501.5h1M1034 501.5h1M1069 501.5h1M1104 501.5h1M1139 501.5h1M1174 501.5h1M1209 501.5h1M1244 501.5h1M1279 501.5h1M1314 501.5h1M1349 501.5h1M1384 501.5h1M1419 501.5h1M1454 501.5h1M1489 501.5h1M1524 501.5h1M1559 501.5h1M1594 501.5h1M1629 501.5h1M1664 501.5h1M1699 501.5h1M1734 501.5h1M20 512.5h1M55 512.5h1M90 512.5h1M125 512.5h1M160 512.5h1M195 512.5h1M230 512.5h1M265 512.5h1M300 512.5h1M335 512.5h1M370 512.5h1M405 512.5h1M440 512.5h1M475 512.5h1M510 512.5h1M545 512.5h1M580 512.5h1M615 512.5h1M650 512.5h1M685 512.5h1M720 512.5h1M755 512.5h1M789 512.5h1M824 512.5h1M859 512.5h1M894 512.5h1M929 512.5h1M964 512.5h1M999 512.5h1M1034 512.5h1M1069 512.5h1M1104 512.5h1M1139 512.5h1M1174 512.5h1M1209 512.5h1M1244 512.5h1M1279 512.5h1M1314 512.5h1M1349 512.5h1M1384 512.5h1M1419 512.5h1M1454 512.5h1M1489 512.5h1M1524 512.5h1M1559 512.5h1M1594 512.5h1M1629 512.5h1M1664 512.5h1M20 526.5h1M55 526.5h1M90 526.5h1M125 526.5h1M160 526.5h1M195 526.5h1M230 526.5h1M265 526.5h1M300 526.5h1M335 526.5h1M370 526.5h1M405 526.5h1M440 526.5h1M475 526.5h1M510 526.5h1M545 526.5h1M580 526.5h1M615 526.5h1M650 526.5h1M685 526.5h1M720 526.5h1M755 526.5h1M789 526.5h1M824 526.5h1M859 526.5h1M894 526.5h1M929 526.5h1M964 526.5h1M999 526.5h1M1034 526.5h1M1069 526.5h1M1104 526.5h1M1139 526.5h1M1174 526.5h1M1209 526.5h1M1244 526.5h1M1279 526.5h1M1314 526.5h1M1349 526.5h1M1384 526.5h1M1419 526.5h1M1454 526.5h1M1489 526.5h1M1524 526.5h1M1559 526.5h1M1594 526.5h1M1629 526.5h1M1664 526.5h1M1699 526.5h1M1734 526.5h1M20 537.5h1M55 537.5h1M90 537.5h1M125 537.5h1M160 537.5h1M195 537.5h1M230 537.5h1M265 537.5h1M300 537.5h1M335 537.5h1M370 537.5h1M405 537.5h1M440 537.5h1M475 537.5h1M510 537.5h1M545 537.5h1M580 537.5h1M615 537.5h1M650 537.5h1M685 537.5h1M720 537.5h1M755 537.5h1M789 537.5h1M824 537.5h1M859 537.5h1M894 537.5h1M929 537.5h1M964 537.5h1M999 537.5h1M1034 537.5h1M1069 537.5h1M1104 537.5h1M1139 537.5h1M1174 537.5h1M1209 537.5h1M1244 537.5h1M1279 537.5h1M1314 537.5h1M1349 537.5h1M1384 537.5h1M1419 537.5h1M1454 537.5h1M1489 537.5h1M1524 537.5h1M1559 537.5h1M1594 537.5h1M1629 537.5h1M1664 537.5h1M1699 537.5h1M20 549.5h1M55 549.5h1M90 549.5h1M125 549.5h1M160 549.5h1M195 549.5h1M230 549.5h1M265 549.5h1M300 549.5h1M335 549.5h1M370 549.5h1M405 549.5h1M440 549.5h1M475 549.5h1M510 549.5h1M545 549.5h1M580 549.5h1M615 549.5h1M650 549.5h1M685 549.5h1M720 549.5h1M755 549.5h1M789 549.5h1M824 549.5h1M859 549.5h1M894 549.5h1M929 549.5h1M964 549.5h1M999 549.5h1M1034 549.5h1M1069 549.5h1M1104 549.5h1M1139 549.5h1M1174 549.5h1M1209 549.5h1M1244 549.5h1M1279 549.5h1M1314 549.5h1M1349 549.5h1M1384 549.5h1M1419 549.5h1M1454 549.5h1M1489 549.5h1M1524 549.5h1M1559 549.5h1M1594 549.5h1M1629 549.5h1M1664 549.5h1M1699 549.5h1M1734 549.5h1M20 560.5h1M55 560.5h1M90 560.5h1M125 560.5h1M160 560.5h1M195 560.5h1M230 560.5h1M265 560.5h1M300 560.5h1M335 560.5h1M370 560.5h1M405 560.5h1M440 560.5h1M475 560.5h1M510 560.5h1M545 560.5h1M580 560.5h1M615 560.5h1M650 560.5h1M685 560.5h1M720 560.5h1M755 560.5h1M789 560.5h1M824 560.5h1M859 560.5h1M894 560.5h1M929 560.5h1M964 560.5h1M999 560.5h1M1034 560.5h1M1069 560.5h1M1104 560.5h1M1139 560.5h1M1174 560.5h1M1209 560.5h1M1244 560.5h1M1279 560.5h1M1314 560.5h1M1349 560.5h1M1384 560.5h1M1419 560.5h1M1454 560.5h1M1489 560.5h1M1524 560.5h1M1559 560.5h1M1594 560.5h1M1629 560.5h1M1664 560.5h1M1699 560.5h1M20 572.5h1M55 572.5h1M90 572.5h1M125 572.5h1M160 572.5h1M195 572.5h1M230 572.5h1M265 572.5h1M300 572.5h1M335 572.5h1M370 572.5h1M405 572.5h1M440 572.5h1M475 572.5h1M510 572.5h1M545 572.5h1M580 572.5h1M615 572.5h1M650 572.5h1M685 572.5h1M720 572.5h1M755 572.5h1M789 572.5h1M824 572.5h1M859 572.5h1M894 572.5h1M929 572.5h1M964 572.5h1M999 572.5h1M1034 572.5h1M1069 572.5h1M1104 572.5h1M1139 572.5h1M1174 572.5h1M1209 572.5h1M1244 572.5h1M1279 572.5h1M1314 572.5h1M1349 572.5h1M1384 572.5h1M1419 572.5h1M1454 572.5h1M1489 572.5h1M1524 572.5h1M1559 572.5h1M1594 572.5h1M1629 572.5h1M1664 572.5h1M1699 572.5h1M1734 572.5h1M20 595.5h1M55 595.5h1M90 595.5h1M125 595.5h1M160 595.5h1M195 595.5h1M230 595.5h1M265 595.5h1M300 595.5h1M335 595.5h1M370 595.5h1M405 595.5h1M440 595.5h1M475 595.5h1M510 595.5h1M545 595.5h1M580 595.5h1M615 595.5h1M650 595.5h1M685 595.5h1M720 595.5h1M755 595.5h1M789 595.5h1M824 595.5h1M859 595.5h1M894 595.5h1M929 595.5h1M964 595.5h1M999 595.5h1M1034 595.5h1M1069 595.5h1M1104 595.5h1M1139 595.5h1M1174 595.5h1M1209 595.5h1M1244 595.5h1M1279 595.5h1M1314 595.5h1M1349 595.5h1M1384 595.5h1M1419 595.5h1M1454 595.5h1M1489 595.5h1M1524 595.5h1M1559 595.5h1M1594 595.5h1M1629 595.5h1M1664 595.5h1M1699 595.5h1M1734 595.5h1M20 606.5h1M55 606.5h1M90 606.5h1M125 606.5h1M160 606.5h1M195 606.5h1M230 606.5h1M265 606.5h1M300 606.5h1M335 606.5h1M370 606.5h1M405 606.5h1M440 606.5h1M475 606.5h1M510 606.5h1M545 606.5h1M580 606.5h1M615 606.5h1M650 606.5h1M685 606.5h1M720 606.5h1M755 606.5h1M789 606.5h1M824 606.5h1M859 606.5h1M894 606.5h1M929 606.5h1M964 606.5h1M999 606.5h1M1034 606.5h1M1069 606.5h1M1104 606.5h1M1139 606.5h1M1174 606.5h1M1209 606.5h1M1244 606.5h1M1279 606.5h1M1314 606.5h1M1349 606.5h1M1384 606.5h1M1419 606.5h1M1454 606.5h1M1489 606.5h1M1524 606.5h1M1559 606.5h1M1594 606.5h1M1629 606.5h1M1664 606.5h1M1699 606.5h1M20 618.5h1M55 618.5h1M90 618.5h1M125 618.5h1M160 618.5h1M195 618.5h1M230 618.5h1M265 618.5h1M300 618.5h1M335 618.5h1M370 618.5h1M405 618.5h1M440 618.5h1M475 618.5h1M510 618.5h1M545 618.5h1M580 618.5h1M615 618.5h1M650 618.5h1M685 618.5h1M720 618.5h1M755 618.5h1M789 618.5h1M824 618.5h1M859 618.5h1M894 618.5h1M929 618.5h1M964 618.5h1M999 618.5h1M1034 618.5h1M1069 618.5h1M1104 618.5h1M1139 618.5h1M1174 618.5h1M1209 618.5h1M1244 618.5h1M1279 618.5h1M1314 618.5h1M1349 618.5h1M1384 618.5h1M1419 618.5h1M1454 618.5h1M1489 618.5h1M1524 618.5h1M1559 618.5h1M1594 618.5h1M1629 618.5h1M1664 618.5h1M1699 618.5h1M1734 618.5h1M20 629.5h1M55 629.5h1M90 629.5h1M125 629.5h1M160 629.5h1M195 629.5h1M230 629.5h1M265 629.5h1M300 629.5h1M335 629.5h1M370 629.5h1M405 629.5h1M440 629.5h1M475 629.5h1M510 629.5h1M545 629.5h1M580 629.5h1M615 629.5h1M650 629.5h1M685 629.5h1M720 629.5h1M755 629.5h1M789 629.5h1M824 629.5h1M859 629.5h1M894 629.5h1M929 629.5h1M964 629.5h1M999 629.5h1M1034 629.5h1M1069 629.5h1M1104 629.5h1M1139 629.5h1M1174 629.5h1M1209 629.5h1M1244 629.5h1M1279 629.5h1M1314 629.5h1M1349 629.5h1M1384 629.5h1M1419 629.5h1M1454 629.5h1M1489 629.5h1M1524 629.5h1M1559 629.5h1M1594 629.5h1M1629 629.5h1M1664 629.5h1M1699 629.5h1M20 643.5h1M55 643.5h1M90 643.5h1M125 643.5h1M160 643.5h1M195 643.5h1M230 643.5h1M265 643.5h1M300 643.5h1M335 643.5h1M370 643.5h1M405 643.5h1M440 643.5h1M475 643.5h1M510 643.5h1M545 643.5h1M580 643.5h1M615 643.5h1M650 643.5h1M685 643.5h1M720 643.5h1M755 643.5h1M789 643.5h1M824 643.5h1M859 643.5h1M894 643.5h1M929 643.5h1M964 643.5h1M999 643.5h1M1034 643.5h1M1069 643.5h1M1104 643.5h1M1139 643.5h1M1174 643.5h1M1209 643.5h1M1244 643.5h1M1279 643.5h1M1314 643.5h1M1349 643.5h1M1384 643.5h1M1419 643.5h1M1454 643.5h1M1489 643.5h1M1524 643.5h1M1559 643.5h1M1594 643.5h1M1629 643.5h1M1664 643.5h1M1699 643.5h1M1734 643.5h1M20 654.5h1M55 654.5h1M90 654.5h1M125 654.5h1M160 654.5h1M195 654.5h1M230 654.5h1M265 654.5h1M300 654.5h1M335 654.5h1M370 654.5h1M405 654.5h1M440 654.5h1M475 654.5h1M510 654.5h1M545 654.5h1M580 654.5h1M615 654.5h1M650 654.5h1M685 654.5h1M720 654.5h1M755 654.5h1M789 654.5h1M824 654.5h1M859 654.5h1M894 654.5h1M929 654.5h1M964 654.5h1M999 654.5h1M1034 654.5h1M1069 654.5h1M1104 654.5h1M1139 654.5h1M1174 654.5h1M1209 654.5h1M1244 654.5h1M1279 654.5h1M1314 654.5h1M1349 654.5h1M1384 654.5h1M1419 654.5h1M1454 654.5h1M1489 654.5h1M1524 654.5h1M1559 654.5h1M1594 654.5h1M1629 654.5h1M1664 654.5h1M1699 654.5h1M20 666.5h1M55 666.5h1M90 666.5h1M125 666.5h1M160 666.5h1M195 666.5h1M230 666.5h1M265 666.5h1M300 666.5h1M335 666.5h1M370 666.5h1M405 666.5h1M440 666.5h1M475 666.5h1M510 666.5h1M545 666.5h1M580 666.5h1M615 666.5h1M650 666.5h1M685 666.5h1M720 666.5h1M755 666.5h1M789 666.5h1M824 666.5h1M859 666.5h1M894 666.5h1M929 666.5h1M964 666.5h1M999 666.5h1M1034 666.5h1M1069 666.5h1M1104 666.5h1M1139 666.5h1M1174 666.5h1M1209 666.5h1M1244 666.5h1M1279 666.5h1M1314 666.5h1M1349 666.5h1M1384 666.5h1M1419 666.5h1M1454 666.5h1M1489 666.5h1M1524 666.5h1M1559 666.5h1M1594 666.5h1M1629 666.5h1M1664 666.5h1M1699 666.5h1M1734 666.5h1M20 677.5h1M55 677.5h1M90 677.5h1M125 677.5h1M160 677.5h1M195 677.5h1M230 677.5h1M265 677.5h1M300 677.5h1M335 677.5h1M370 677.5h1M405 677.5h1M440 677.5h1M475 677.5h1M510 677.5h1M545 677.5h1M580 677.5h1M615 677.5h1M650 677.5h1M685 677.5h1M720 677.5h1M755 677.5h1M789 677.5h1M824 677.5h1M859 677.5h1M894 677.5h1M929 677.5h1M964 677.5h1M999 677.5h1M1034 677.5h1M1069 677.5h1M1104 677.5h1M1139 677.5h1M1174 677.5h1M1209 677.5h1M1244 677.5h1M1279 677.5h1M1314 677.5h1M1349 677.5h1M1384 677.5h1M1419 677.5h1M1454 677.5h1M1489 677.5h1M1524 677.5h1M1559 677.5h1M1594 677.5h1M1629 677.5h1M1664 677.5h1M1699 677.5h1M20 689.5h1M55 689.5h1M90 689.5h1M125 689.5h1M160 689.5h1M195 689.5h1M230 689.5h1M265 689.5h1M300 689.5h1M335 689.5h1M370 689.5h1M405 689.5h1M440 689.5h1M475 689.5h1M510 689.5h1M545 689.5h1M580 689.5h1M615 689.5h1M650 689.5h1M685 689.5h1M720 689.5h1M755 689.5h1M789 689.5h1M824 689.5h1M859 689.5h1M894 689.5h1M929 689.5h1M964 689.5h1M999 689.5h1M1034 689.5h1M1069 689.5h1M1104 689.5h1M1139 689.5h1M1174 689.5h1M1209 689.5h1M1244 689.5h1M1279 689.5h1M1314 689.5h1M1349 689.5h1M1384 689.5h1M1419 689.5h1M1454 689.5h1M1489 689.5h1M1524 689.5h1M1559 689.5h1M1594 689.5h1M1629 689.5h1M1664 689.5h1M1699 689.5h1M1734 689.5h1M20 700.5h1M55 700.5h1M90 700.5h1M125 700.5h1M160 700.5h1M195 700.5h1M230 700.5h1M265 700.5h1M300 700.5h1M335 700.5h1M370 700.5h1M405 700.5h1M440 700.5h1M475 700.5h1M510 700.5h1M545 700.5h1M580 700.5h1M615 700.5h1M650 700.5h1M685 700.5h1M720 700.5h1M755 700.5h1M789 700.5h1M824 700.5h1M859 700.5h1M894 700.5h1M929 700.5h1M964 700.5h1M999 700.5h1M1034 700.5h1M1069 700.5h1M1104 700.5h1M1139 700.5h1M1174 700.5h1M1209 700.5h1M1244 700.5h1M1279 700.5h1M1314 700.5h1M1349 700.5h1M1384 700.5h1M1419 700.5h1M1454 700.5h1M1489 700.5h1M1524 700.5h1M1559 700.5h1M1594 700.5h1M1629 700.5h1M1664 700.5h1M1699 700.5h1M20 712.5h1M55 712.5h1M90 712.5h1M125 712.5h1M160 712.5h1M195 712.5h1M230 712.5h1M265 712.5h1M300 712.5h1M335 712.5h1M370 712.5h1M405 712.5h1M440 712.5h1M475 712.5h1M510 712.5h1M545 712.5h1M580 712.5h1M615 712.5h1M650 712.5h1M685 712.5h1M720 712.5h1M755 712.5h1M789 712.5h1M824 712.5h1M859 712.5h1M894 712.5h1M929 712.5h1M964 712.5h1M999 712.5h1M1034 712.5h1M1069 712.5h1M1104 712.5h1M1139 712.5h1M1174 712.5h1M1209 712.5h1M1244 712.5h1M1279 712.5h1M1314 712.5h1M1349 712.5h1M1384 712.5h1M1419 712.5h1M1454 712.5h1M1489 712.5h1M1524 712.5h1M1559 712.5h1M1594 712.5h1M1629 712.5h1M1664 712.5h1M1699 712.5h1M1734 712.5h1M20 723.5h1M55 723.5h1M90 723.5h1M125 723.5h1M160 723.5h1M195 723.5h1M230 723.5h1M265 723.5h1M300 723.5h1M335 723.5h1M370 723.5h1M405 723.5h1M440 723.5h1M475 723.5h1M510 723.5h1M545 723.5h1M580 723.5h1M615 723.5h1M650 723.5h1M685 723.5h1M720 723.5h1M755 723.5h1M789 723.5h1M824 723.5h1M859 723.5h1M894 723.5h1M929 723.5h1M964 723.5h1M999 723.5h1M1034 723.5h1M1069 723.5h1M1104 723.5h1M1139 723.5h1M1174 723.5h1M1209 723.5h1M1244 723.5h1M1279 723.5h1M1314 723.5h1M1349 723.5h1M1384 723.5h1M1419 723.5h1M1454 723.5h1M1489 723.5h1M1524 723.5h1M1559 723.5h1M1594 723.5h1M1629 723.5h1M1664 723.5h1M1699 723.5h1M20 735.5h1M55 735.5h1M90 735.5h1M125 735.5h1M160 735.5h1M195 735.5h1M230 735.5h1M265 735.5h1M300 735.5h1M335 735.5h1M370 735.5h1M405 735.5h1M440 735.5h1M475 735.5h1M510 735.5h1M545 735.5h1M580 735.5h1M615 735.5h1M650 735.5h1M685 735.5h1M720 735.5h1M755 735.5h1M789 735.5h1M824 735.5h1M859 735.5h1M894 735.5h1M929 735.5h1M964 735.5h1M999 735.5h1M1034 735.5h1M1069 735.5h1M1104 735.5h1M1139 735.5h1M1174 735.5h1M1209 735.5h1M1244 735.5h1M1279 735.5h1M1314 735.5h1M1349 735.5h1M1384 735.5h1M1419 735.5h1M1454 735.5h1M1489 735.5h1M1524 735.5h1M1559 735.5h1M1594 735.5h1M1629 735.5h1M1664 735.5h1M1699 735.5h1M1734 735.5h1M20 760.5h1M55 760.5h1M90 760.5h1M125 760.5h1M160 760.5h1M195 760.5h1M230 760.5h1M265 760.5h1M300 760.5h1M335 760.5h1M370 760.5h1M405 760.5h1M440 760.5h1M475 760.5h1M510 760.5h1M545 760.5h1M580 760.5h1M615 760.5h1M650 760.5h1M685 760.5h1M720 760.5h1M755 760.5h1M789 760.5h1M824 760.5h1M859 760.5h1M894 760.5h1M929 760.5h1M964 760.5h1M999 760.5h1M1034 760.5h1M1069 760.5h1M1104 760.5h1M1139 760.5h1M1174 760.5h1M1209 760.5h1M1244 760.5h1M1279 760.5h1M1314 760.5h1M1349 760.5h1M1384 760.5h1M1419 760.5h1M1454 760.5h1M1489 760.5h1M1524 760.5h1M1559 760.5h1M1594 760.5h1M1629 760.5h1M1664 760.5h1M1699 760.5h1M1734 760.5h1M20 771.5h1M55 771.5h1M90 771.5h1M125 771.5h1M160 771.5h1M195 771.5h1M230 771.5h1M265 771.5h1M300 771.5h1M335 771.5h1M370 771.5h1M405 771.5h1M440 771.5h1M475 771.5h1M510 771.5h1M545 771.5h1M580 771.5h1M615 771.5h1M650 771.5h1M685 771.5h1M720 771.5h1M755 771.5h1M789 771.5h1M824 771.5h1M859 771.5h1M894 771.5h1M929 771.5h1M964 771.5h1M999 771.5h1M1034 771.5h1M1069 771.5h1M1104 771.5h1M1139 771.5h1M1174 771.5h1M1209 771.5h1M1244 771.5h1M1279 771.5h1M1314 771.5h1M1349 771.5h1M1384 771.5h1M1419 771.5h1M1454 771.5h1M1489 771.5h1M1524 771.5h1M1559 771.5h1M1594 771.5h1M1629 771.5h1M1664 771.5h1M20 783.5h1M55 783.5h1M90 783.5h1M125 783.5h1M160 783.5h1M195 783.5h1M230 783.5h1M265 783.5h1M300 783.5h1M335 783.5h1M370 783.5h1M405 783.5h1M440 783.5h1M475 783.5h1M510 783.5h1M545 783.5h1M580 783.5h1M615 783.5h1M650 783.5h1M685 783.5h1M720 783.5h1M755 783.5h1M789 783.5h1M824 783.5h1M859 783.5h1M894 783.5h1M929 783.5h1M964 783.5h1M999 783.5h1M1034 783.5h1M1069 783.5h1M1104 783.5h1M1139 783.5h1M1174 783.5h1M1209 783.5h1M1244 783.5h1M1279 783.5h1M1314 783.5h1M1349 783.5h1M1384 783.5h1M1419 783.5h1M1454 783.5h1M1489 783.5h1M1524 783.5h1M1559 783.5h1M1594 783.5h1M1629 783.5h1M1664 783.5h1M1699 783.5h1M1734 783.5h1M20 794.5h1M55 794.5h1M90 794.5h1M125 794.5h1M160 794.5h1M195 794.5h1M230 794.5h1M265 794.5h1M300 794.5h1M335 794.5h1M370 794.5h1M405 794.5h1M440 794.5h1M475 794.5h1M510 794.5h1M545 794.5h1M580 794.5h1M615 794.5h1M650 794.5h1M685 794.5h1M720 794.5h1M755 794.5h1M789 794.5h1M824 794.5h1M859 794.5h1M894 794.5h1M929 794.5h1M964 794.5h1M999 794.5h1M1034 794.5h1M1069 794.5h1M1104 794.5h1M1139 794.5h1M1174 794.5h1M1209 794.5h1M1244 794.5h1M1279 794.5h1M1314 794.5h1M1349 794.5h1M1384 794.5h1M1419 794.5h1M1454 794.5h1M1489 794.5h1M1524 794.5h1M1559 794.5h1M1594 794.5h1M1629 794.5h1M1664 794.5h1M20 806.5h1M55 806.5h1M90 806.5h1M125 806.5h1M160 806.5h1M195 806.5h1M230 806.5h1M265 806.5h1M300 806.5h1M335 806.5h1M370 806.5h1M405 806.5h1M440 806.5h1M475 806.5h1M510 806.5h1M545 806.5h1M580 806.5h1M615 806.5h1M650 806.5h1M685 806.5h1M720 806.5h1M755 806.5h1M789 806.5h1M824 806.5h1M859 806.5h1M894 806.5h1M929 806.5h1M964 806.5h1M999 806.5h1M1034 806.5h1M1069 806.5h1M1104 806.5h1M1139 806.5h1M1174 806.5h1M1209 806.5h1M1244 806.5h1M1279 806.5h1M1314 806.5h1M1349 806.5h1M1384 806.5h1M1419 806.5h1M1454 806.5h1M1489 806.5h1M1524 806.5h1M1559 806.5h1M1594 806.5h1M1629 806.5h1M1664 806.5h1M1699 806.5h1M1734 806.5h1M20 817.5h1M55 817.5h1M90 817.5h1M125 817.5h1M160 817.5h1M195 817.5h1M230 817.5h1M265 817.5h1M300 817.5h1M335 817.5h1M370 817.5h1M405 817.5h1M440 817.5h1M475 817.5h1M510 817.5h1M545 817.5h1M580 817.5h1M615 817.5h1M650 817.5h1M685 817.5h1M720 817.5h1M755 817.5h1M789 817.5h1M824 817.5h1M859 817.5h1M894 817.5h1M929 817.5h1M964 817.5h1M999 817.5h1M1034 817.5h1M1069 817.5h1M1104 817.5h1M1139 817.5h1M1174 817.5h1M1209 817.5h1M1244 817.5h1M1279 817.5h1M1314 817.5h1M1349 817.5h1M1384 817.5h1M1419 817.5h1M1454 817.5h1M1489 817.5h1M1524 817.5h1M1559 817.5h1M1594 817.5h1M1629 817.5h1M1664 817.5h1M20 829.5h1M55 829.5h1M90 829.5h1M125 829.5h1M160 829.5h1M195 829.5h1M230 829.5h1M265 829.5h1M300 829.5h1M335 829.5h1M370 829.5h1M405 829.5h1M440 829.5h1M475 829.5h1M510 829.5h1M545 829.5h1M580 829.5h1M615 829.5h1M650 829.5h1M685 829.5h1M720 829.5h1M755 829.5h1M789 829.5h1M824 829.5h1M859 829.5h1M894 829.5h1M929 829.5h1M964 829.5h1M999 829.5h1M1034 829.5h1M1069 829.5h1M1104 829.5h1M1139 829.5h1M1174 829.5h1M1209 829.5h1M1244 829.5h1M1279 829.5h1M1314 829.5h1M1349 829.5h1M1384 829.5h1M1419 829.5h1M1454 829.5h1M1489 829.5h1M1524 829.5h1M1559 829.5h1M1594 829.5h1M1629 829.5h1M1664 829.5h1M1699 829.5h1M1734 829.5h1M20 840.5h1M55 840.5h1M90 840.5h1M125 840.5h1M160 840.5h1M195 840.5h1M230 840.5h1M265 840.5h1M300 840.5h1M335 840.5h1M370 840.5h1M405 840.5h1M440 840.5h1M475 840.5h1M510 840.5h1M545 840.5h1M580 840.5h1M615 840.5h1M650 840.5h1M685 840.5h1M720 840.5h1M755 840.5h1M789 840.5h1M824 840.5h1M859 840.5h1M894 840.5h1M929 840.5h1M964 840.5h1M999 840.5h1M1034 840.5h1M1069 840.5h1M1104 840.5h1M1139 840.5h1M1174 840.5h1M1209 840.5h1M1244 840.5h1M1279 840.5h1M1314 840.5h1M1349 840.5h1M1384 840.5h1M1419 840.5h1M1454 840.5h1M1489 840.5h1M1524 840.5h1M1559 840.5h1M1594 840.5h1M1629 840.5h1M1664 840.5h1M20 852.5h1M55 852.5h1M90 852.5h1M125 852.5h1M160 852.5h1M195 852.5h1M230 852.5h1M265 852.5h1M300 852.5h1M335 852.5h1M370 852.5h1M405 852.5h1M440 852.5h1M475 852.5h1M510 852.5h1M545 852.5h1M580 852.5h1M615 852.5h1M650 852.5h1M685 852.5h1M720 852.5h1M755 852.5h1M789 852.5h1M824 852.5h1M859 852.5h1M894 852.5h1M929 852.5h1M964 852.5h1M999 852.5h1M1034 852.5h1M1069 852.5h1M1104 852.5h1M1139 852.5h1M1174 852.5h1M1209 852.5h1M1244 852.5h1M1279 852.5h1M1314 852.5h1M1349 852.5h1M1384 852.5h1M1419 852.5h1M1454 852.5h1M1489 852.5h1M1524 852.5h1M1559 852.5h1M1594 852.5h1M1629 852.5h1M1664 852.5h1M1699 852.5h1M1734 852.5h1M20 886.5h1M55 886.5h1M90 886.5h1M125 886.5h1M160 886.5h1M195 886.5h1M230 886.5h1M265 886.5h1M300 886.5h1M335 886.5h1M370 886.5h1M405 886.5h1M440 886.5h1M475 886.5h1M510 886.5h1M545 886.5h1M580 886.5h1M615 886.5h1M650 886.5h1M685 886.5h1M720 886.5h1M755 886.5h1M789 886.5h1M824 886.5h1M859 886.5h1M894 886.5h1M929 886.5h1M964 886.5h1M999 886.5h1M1034 886.5h1M1069 886.5h1M1104 886.5h1M1139 886.5h1M1174 886.5h1M1209 886.5h1M1244 886.5h1M1279 886.5h1M1314 886.5h1M1349 886.5h1M1384 886.5h1M1419 886.5h1M1454 886.5h1M1489 886.5h1M1524 886.5h1M1559 886.5h1M1594 886.5h1M1629 886.5h1M1664 886.5h1M20 897.5h1M55 897.5h1M90 897.5h1M125 897.5h1M160 897.5h1M195 897.5h1M230 897.5h1M265 897.5h1M300 897.5h1M335 897.5h1M370 897.5h1M405 897.5h1M440 897.5h1M475 897.5h1M510 897.5h1M545 897.5h1M580 897.5h1M615 897.5h1M650 897.5h1M685 897.5h1M720 897.5h1M755 897.5h1M789 897.5h1M824 897.5h1M859 897.5h1M894 897.5h1M929 897.5h1M964 897.5h1M999 897.5h1M1034 897.5h1M1069 897.5h1M1104 897.5h1M1139 897.5h1M1174 897.5h1M1209 897.5h1M1244 897.5h1M1279 897.5h1M1314 897.5h1M1349 897.5h1M1384 897.5h1M1419 897.5h1M1454 897.5h1M1489 897.5h1M1524 897.5h1M1559 897.5h1M1594 897.5h1M1629 897.5h1M1664 897.5h1M1699 897.5h1M1734 897.5h1M20 909.5h1M55 909.5h1M90 909.5h1M125 909.5h1M160 909.5h1M195 909.5h1M230 909.5h1M265 909.5h1M300 909.5h1M335 909.5h1M370 909.5h1M405 909.5h1M440 909.5h1M475 909.5h1M510 909.5h1M545 909.5h1M580 909.5h1M615 909.5h1M650 909.5h1M685 909.5h1M720 909.5h1M755 909.5h1M789 909.5h1M824 909.5h1M859 909.5h1M894 909.5h1M929 909.5h1M964 909.5h1M999 909.5h1M1034 909.5h1M1069 909.5h1M1104 909.5h1M1139 909.5h1M1174 909.5h1M1209 909.5h1M1244 909.5h1M1279 909.5h1M1314 909.5h1M1349 909.5h1M1384 909.5h1M1419 909.5h1M1454 909.5h1M1489 909.5h1M1524 909.5h1M1559 909.5h1M1594 909.5h1M1629 909.5h1M1664 909.5h1M20 920.5h1M55 920.5h1M90 920.5h1M125 920.5h1M160 920.5h1M195 920.5h1M230 920.5h1M265 920.5h1M300 920.5h1M335 920.5h1M370 920.5h1M405 920.5h1M440 920.5h1M475 920.5h1M510 920.5h1M545 920.5h1M580 920.5h1M615 920.5h1M650 920.5h1M685 920.5h1M720 920.5h1M755 920.5h1M789 920.5h1M824 920.5h1M859 920.5h1M894 920.5h1M929 920.5h1M964 920.5h1M999 920.5h1M1034 920.5h1M1069 920.5h1M1104 920.5h1M1139 920.5h1M1174 920.5h1M1209 920.5h1M1244 920.5h1M1279 920.5h1M1314 920.5h1M1349 920.5h1M1384 920.5h1M1419 920.5h1M1454 920.5h1M1489 920.5h1M1524 920.5h1M1559 920.5h1M1594 920.5h1M1629 920.5h1M1664 920.5h1M1699 920.5h1M1734 920.5h1M20 932.5h1M55 932.5h1M90 932.5h1M125 932.5h1M160 932.5h1M195 932.5h1M230 932.5h1M265 932.5h1M300 932.5h1M335 932.5h1M370 932.5h1M405 932.5h1M440 932.5h1M475 932.5h1M510 932.5h1M545 932.5h1M580 932.5h1M615 932.5h1M650 932.5h1M685 932.5h1M720 932.5h1M755 932.5h1M789 932.5h1M824 932.5h1M859 932.5h1M894 932.5h1M929 932.5h1M964 932.5h1M999 932.5h1M1034 932.5h1M1069 932.5h1M1104 932.5h1M1139 932.5h1M1174 932.5h1M1209 932.5h1M1244 932.5h1M1279 932.5h1M1314 932.5h1M1349 932.5h1M1384 932.5h1M1419 932.5h1M1454 932.5h1M1489 932.5h1M1524 932.5h1M1559 932.5h1M1594 932.5h1M1629 932.5h1M1664 932.5h1M20 955.5h1M55 955.5h1M90 955.5h1M125 955.5h1M160 955.5h1M195 955.5h1M230 955.5h1M265 955.5h1M300 955.5h1M335 955.5h1M370 955.5h1M405 955.5h1M440 955.5h1M475 955.5h1M510 955.5h1M545 955.5h1M580 955.5h1M615 955.5h1M650 955.5h1M685 955.5h1M720 955.5h1M755 955.5h1M789 955.5h1M824 955.5h1M859 955.5h1M894 955.5h1M929 955.5h1M964 955.5h1M999 955.5h1M1034 955.5h1M1069 955.5h1M1104 955.5h1M1139 955.5h1M1174 955.5h1M1209 955.5h1M1244 955.5h1M1279 955.5h1M1314 955.5h1M1349 955.5h1M1384 955.5h1M1419 955.5h1M1454 955.5h1M1489 955.5h1M1524 955.5h1M1559 955.5h1M1594 955.5h1M1629 955.5h1M1664 955.5h1M20 966.5h1M55 966.5h1M90 966.5h1M125 966.5h1M160 966.5h1M195 966.5h1M230 966.5h1M265 966.5h1M300 966.5h1M335 966.5h1M370 966.5h1M405 966.5h1M440 966.5h1M475 966.5h1M510 966.5h1M545 966.5h1M580 966.5h1M615 966.5h1M650 966.5h1M685 966.5h1M720 966.5h1M755 966.5h1M789 966.5h1M824 966.5h1M859 966.5h1M894 966.5h1M929 966.5h1M964 966.5h1M999 966.5h1M1034 966.5h1M1069 966.5h1M1104 966.5h1M1139 966.5h1M1174 966.5h1M1209 966.5h1M1244 966.5h1M1279 966.5h1M1314 966.5h1M1349 966.5h1M1384 966.5h1M1419 966.5h1M1454 966.5h1M1489 966.5h1M1524 966.5h1M1559 966.5h1M1594 966.5h1M1629 966.5h1M1664 966.5h1M1699 966.5h1M1734 966.5h1M20 978.5h1M55 978.5h1M90 978.5h1M125 978.5h1M160 978.5h1M195 978.5h1M230 978.5h1M265 978.5h1M300 978.5h1M335 978.5h1M370 978.5h1M405 978.5h1M440 978.5h1M475 978.5h1M510 978.5h1M545 978.5h1M580 978.5h1M615 978.5h1M650 978.5h1M685 978.5h1M720 978.5h1M755 978.5h1M789 978.5h1M824 978.5h1M859 978.5h1M894 978.5h1M929 978.5h1M964 978.5h1M999 978.5h1M1034 978.5h1M1069 978.5h1M1104 978.5h1M1139 978.5h1M1174 978.5h1M1209 978.5h1M1244 978.5h1M1279 978.5h1M1314 978.5h1M1349 978.5h1M1384 978.5h1M1419 978.5h1M1454 978.5h1M1489 978.5h1M1524 978.5h1M1559 978.5h1M1594 978.5h1M1629 978.5h1M1664 978.5h1M20 989.5h1M55 989.5h1M90 989.5h1M125 989.5h1M160 989.5h1M195 989.5h1M230 989.5h1M265 989.5h1M300 989.5h1M335 989.5h1M370 989.5h1M405 989.5h1M440 989.5h1M475 989.5h1M510 989.5h1M545 989.5h1M580 989.5h1M615 989.5h1M650 989.5h1M685 989.5h1M720 989.5h1M755 989.5h1M789 989.5h1M824 989.5h1M859 989.5h1M894 989.5h1M929 989.5h1M964 989.5h1M999 989.5h1M1034 989.5h1M1069 989.5h1M1104 989.5h1M1139 989.5h1M1174 989.5h1M1209 989.5h1M1244 989.5h1M1279 989.5h1M1314 989.5h1M1349 989.5h1M1384 989.5h1M1419 989.5h1M1454 989.5h1M1489 989.5h1M1524 989.5h1M1559 989.5h1M1594 989.5h1M1629 989.5h1M1664 989.5h1M1699 989.5h1M1734 989.5h1" stroke="#3c3c3c" stroke-width="1" fill="none" shape-rendering="crispEdges"/>
<path d="M230.5 58V173M405.5 58V173M580.5 58V173M755.5 58V173M929.5 58V173M1104.5 58V173M1279.5 58V173M1454.5 58V173M1629.5 58V173" stroke="#505050" stroke-width="1" stroke-dasharray="1 1.3" stroke-dashoffset="2.30" fill="none" shape-rendering="crispEdges"/>
<path d="M230.5 175V290M405.5 175V290M580.5 175V290M755.5 175V290M929.5 175V290M1104.5 175V290M1279.5 175V290M1454.5 175V290M1629.5 175V290" stroke="#505050" stroke-width="1" stroke-dasharray="1 1.3" stroke-dashoffset="2.10" fill="none" shape-rendering="crispEdges"/>
<path d="M230.5 292V407M405.5 292V407M580.5 292V407M755.5 292V407M929.5 292V407M1104.5 292V407M1279.5 292V407M1454.5 292V407M1629.5 292V407" stroke="#505050" stroke-width="1" stroke-dasharray="1 1.3" stroke-dashoffset="2.30" fill="none" shape-rendering="crispEdges"/>
<path d="M230.5 409V524M405.5 409V524M580.5 409V524M755.5 409V524M929.5 409V524M1104.5 409V524M1279.5 409V524M1454.5 409V524M1629.5 409V524" stroke="#505050" stroke-width="1" stroke-dasharray="1 1.3" stroke-dashoffset="2.30" fill="none" shape-rendering="crispEdges"/>
<path d="M230.5 526V641M405.5 526V641M580.5 526V641M755.5 526V641M929.5 526V641M1104.5 526V641M1279.5 526V641M1454.5 526V641M1629.5 526V641" stroke="#505050" stroke-width="1" stroke-dasharray="1 1.3" stroke-dashoffset="2.30" fill="none" shape-rendering="crispEdges"/>
<path d="M230.5 643V758M405.5 643V758M580.5 643V758M755.5 643V758M929.5 643V758M1104.5 643V758M1279.5 643V758M1454.5 643V758M1629.5 643V758" stroke="#505050" stroke-width="1" stroke-dasharray="1 1.3" stroke-dashoffset="2.30" fill="none" shape-rendering="crispEdges"/>
<path d="M230.5 760V875M405.5 760V875M580.5 760V875M755.5 760V875M929.5 760V875M1104.5 760V875M1279.5 760V875M1454.5 760V875M1629.5 760V875" stroke="#505050" stroke-width="1" stroke-dasharray="1 1.3" stroke-dashoffset="2.30" fill="none" shape-rendering="crispEdges"/>
<path d="M230.5 877V993M405.5 877V993M580.5 877V993M755.5 877V993M929.5 877V993M1104.5 877V993M1279.5 877V993M1454.5 877V993M1629.5 877V993" stroke="#505050" stroke-width="1" stroke-dasharray="1 1.3" stroke-dashoffset="0.20" fill="none" shape-rendering="crispEdges"/>
<path d="M55.5 58V643 M55.5 759V993" stroke="#3a3a3a" stroke-width="1" stroke-dasharray="5 5" fill="none"/>
<rect x="3" y="173" width="1748" height="2" fill="#525252"/><rect x="3" y="290" width="1748" height="2" fill="#525252"/><rect x="3" y="407" width="1748" height="2" fill="#525252"/><rect x="3" y="524" width="1748" height="2" fill="#525252"/><rect x="3" y="641" width="1748" height="2" fill="#525252"/><rect x="3" y="758" width="1748" height="2" fill="#525252"/><rect x="3" y="875" width="1748" height="2" fill="#525252"/>
</svg>
<div class="t" style="left:101.8px;top:104.7px;font-size:19.5px;color:#161616;font-weight:normal;-webkit-text-stroke:0.3px currentColor;text-shadow:0 0 1px rgba(0,0,0,.35)">U_loop,coil</div>
<div class="t" style="left:101.0px;top:222.4px;font-size:19.3px;color:#1fb2c2;font-weight:normal;-webkit-text-stroke:0.3px currentColor;text-shadow:0 0 1px rgba(0,0,0,.35)">U_Bt,coil</div>
<div class="t" style="left:54.0px;top:340.4px;font-size:18.8px;color:#b82a48;font-weight:normal;-webkit-text-stroke:0.3px currentColor;text-shadow:0 0 1px rgba(0,0,0,.35)">U_Rog,coil</div>
<div class="t" style="left:101.0px;top:455.7px;font-size:19.3px;color:#6fae2c;font-weight:normal;-webkit-text-stroke:0.3px currentColor;text-shadow:0 0 1px rgba(0,0,0,.35)">U_Photod</div>
<div class="t" style="left:54.0px;top:573.7px;font-size:19.3px;color:#e8862a;font-weight:normal;-webkit-text-stroke:0.3px currentColor;text-shadow:0 0 1px rgba(0,0,0,.35)">U_Diamagn</div>
<div class="t" style="left:101.0px;top:689.5px;font-size:19.8px;color:#2a2aa6;font-weight:normal;-webkit-text-stroke:0.3px currentColor;text-shadow:0 0 1px rgba(0,0,0,.35)">Trigger</div>
<div class="t" style="left:54.0px;top:840.5px;font-size:26.5px;color:#ec8a1e;font-weight:normal;-webkit-text-stroke:0.3px currentColor;text-shadow:0 0 1px rgba(0,0,0,.35)">B_t</div>
<div class="t" style="left:53.5px;top:932.0px;font-size:19.5px;color:#66238a;font-weight:normal;-webkit-text-stroke:0.3px currentColor;text-shadow:0 0 1px rgba(0,0,0,.35)">I_p</div>
<svg style="position:absolute;left:0;top:0" width="1920" height="1080">
<clipPath id="gc"><rect x="3" y="58" width="1748" height="935"/></clipPath>
<g clip-path="url(#gc)">
<path d="M3.0 160.5 L145.0 160.5 L145.5 157.0 L150.0 156.2 L160.0 152.0 L166.0 148.7 L175.0 148.0 L190.0 144.5 L212.0 141.3 L232.0 139.5 L250.0 138.8 L275.0 137.5 L281.0 135.5 L287.0 136.3 L300.0 136.3 L322.0 137.5 L325.0 139.2 L330.0 137.5 L350.0 137.5 L370.0 136.3 L382.0 137.5 L400.0 141.2 L405.0 142.5 L417.0 142.0 L445.0 142.0 L447.0 140.5 L480.0 141.2 L560.0 141.2 L700.0 141.0 L825.0 142.0 L865.0 143.0 L887.0 144.2 L917.0 146.2 L940.0 149.2 L960.0 151.0 L980.0 153.0 L1000.0 153.8 L1035.0 155.0 L1105.0 155.8 L1185.0 156.2 L1260.0 156.8 L1335.0 157.2 L1385.0 156.6 L1392.0 157.5 L1440.0 157.8 L1445.0 156.3 L1453.0 157.0 L1470.0 155.5 L1482.0 156.7 L1493.0 158.3 L1598.0 158.3 L1601.0 156.2 L1607.0 156.7 L1640.0 157.2 L1644.0 161.2 L1651.0 160.0 L1687.0 159.7 L1723.0 159.5 L1748.0 157.8 L1751.0 157.8" stroke="#111111" stroke-width="1.5" fill="none" stroke-linejoin="round" />
<path d="M3.0 246.3 L6.0 246.3 L6.0 224.0 L56.0 224.0 L56.5 204.0 L58.0 218.0 L60.0 224.0 L82.0 224.2 L100.0 225.0 L146.0 225.5 L146.3 208.0 L146.6 245.0 L147.0 225.5 L175.0 225.8 L230.0 226.8 L305.0 228.0 L370.0 229.2 L435.0 230.2 L480.0 230.5 L562.0 232.0 L620.0 233.2 L680.0 234.2 L737.0 235.0 L792.0 236.0 L847.0 237.0 L905.0 238.2 L960.0 239.2 L1127.0 242.0 L1314.0 245.0 L1377.0 245.4 L1502.0 247.5 L1627.0 249.2 L1751.0 251.3" stroke="#1fbccb" stroke-width="1.5" fill="none" stroke-linejoin="round" />
<path d="M3.0 349.5 L150.0 349.5 L152.0 353.0 L160.0 352.0 L175.0 351.5 L200.0 350.3 L240.0 349.5 L978.0 349.5 L980.0 348.5 L984.0 349.5 L1373.0 349.5 L1375.0 351.5 L1377.0 349.5 L1476.0 349.5 L1477.5 346.5 L1479.0 349.5 L1605.0 349.5 L1608.0 348.0 L1611.0 349.5 L1648.0 349.5 L1650.0 348.5 L1652.0 349.5 L1694.0 349.5 L1695.0 351.5 L1696.0 349.5 L1751.0 349.5" stroke="#e0204a" stroke-width="1.3" fill="none" stroke-linejoin="round" />
<path d="M55 350 L56.5 303 L58.5 304 L59.5 330 L61 350 L60 372 L58 392 L55.5 399 Z" fill="#e0204a"/><path d="M144 352 L145 339 L146.5 345 L148 352 L150 356 L147 362 L145 369 Z" fill="#e0204a"/>
<path d="M3.0 477.3 L370.0 477.3 L381.0 477.2 L387.2 475.4 L391.9 473.3 L396.0 471.2 L399.2 469.2 L402.3 467.3 L406.5 465.0 L409.6 462.9 L412.7 461.4 L414.8 460.3 L434.6 460.3 L439.8 459.5 L589.0 459.6 L716.0 460.8 L803.0 461.6 L843.0 462.8 L874.0 464.0 L906.0 466.8 L930.0 470.0 L954.0 473.5 L981.0 475.9 L1013.0 477.0 L1120.0 477.3 L1751.0 477.3" stroke="#7cc832" stroke-width="1.8" fill="none" stroke-linejoin="round" />
<path d="M3.0 583.5 L1751.0 583.5" stroke="#f29a2e" stroke-width="1.2" fill="none" stroke-linejoin="round" />
<path d="M3.0 746.5 L31.0 746.5 L32.0 748.0 L55.0 748.0 L55.5 668.0" stroke="#0c0cb0" stroke-width="1.5" fill="none" stroke-linejoin="round" />
<path d="M65.0 654.0 L146.0 654.0 L147.0 643.0 L154.0 643.0 L156.0 654.0 L1751.0 654.0" stroke="#0c0cb0" stroke-width="1.6" fill="none" stroke-linejoin="round" />
<path d="M42.0 863.5 L55.0 863.2 L91.7 857.7 L229.0 841.2 L406.0 821.0 L580.0 805.9 L754.6 793.0 L880.0 784.5 L930.5 782.0 L1013.0 778.3 L1105.0 775.1 L1251.5 772.4 L1453.0 772.2 L1525.0 773.0 L1587.5 774.2 L1636.0 775.2 L1712.0 777.5 L1751.0 778.2" stroke="#ea8a1e" stroke-width="1.5" fill="none" stroke-linejoin="round" />
<path d="M3.0 958.0 L42.5 958.7 L54.5 959.0 L55.0 936.0 L55.5 970.0 L56.0 959.5 L80.0 960.0 L143.5 960.5 L144.0 954.0 L144.5 974.5 L145.0 963.0 L150.0 963.7 L155.0 961.2 L162.5 962.5 L167.5 968.7 L175.0 963.7 L225.0 961.7 L275.0 961.7 L280.0 968.0 L287.0 966.2 L287.5 960.0 L288.0 966.2 L306.0 965.5 L307.5 962.5 L322.5 962.5 L323.7 956.2 L328.7 956.2 L330.0 959.5 L364.0 959.5 L367.0 962.0 L372.0 962.0 L380.0 960.0 L387.0 956.5 L393.3 951.7 L398.0 946.0 L403.3 940.7 L410.0 937.3 L416.7 934.0 L430.0 929.0 L445.0 924.0 L446.7 928.3 L460.0 923.0 L476.7 918.3 L500.0 912.0 L526.7 906.7 L550.0 903.0 L580.0 900.0 L600.0 898.3 L626.7 896.8 L650.0 896.2 L676.7 896.0 L700.0 896.8 L726.7 898.3 L745.0 900.5 L760.0 903.0 L777.0 907.0 L793.3 911.7 L813.0 917.0 L833.3 923.3 L847.0 930.0 L860.0 938.5 L870.0 944.0 L880.0 948.3 L893.0 956.0 L906.7 965.0 L916.0 972.0 L926.7 978.3 L940.0 982.3 L953.3 985.0 L975.0 986.5 L1000.0 987.7 L1013.0 988.0 L1120.0 990.7 L1370.0 991.2 L1372.0 991.8 L1380.0 990.8 L1390.0 990.8 L1391.0 988.0 L1396.0 989.0 L1445.0 989.3 L1447.0 996.0 L1490.0 996.0 L1491.5 988.5 L1496.0 990.5 L1503.0 991.5 L1505.0 996.0 L1607.0 996.0 L1608.0 990.0 L1609.0 996.0 L1640.0 996.0 L1641.7 984.3 L1644.0 984.5 L1646.0 987.3 L1686.7 987.5 L1689.0 991.5 L1722.0 991.0 L1727.0 990.0 L1736.0 989.0 L1739.0 991.5 L1745.0 990.0 L1751.0 991.0" stroke="#5e1a8a" stroke-width="1.5" fill="none" stroke-linejoin="round" />
</g>
</svg>
<svg style="position:absolute;left:0;top:0" width="1920" height="1080">
<path d="M3 161.5H1721 M3 246.5H1721 M3 349.5H1721 M3 478.5H1721 M3 583.5H1721 M3 863.5H1721 M3 943.5H1738" stroke="#3a3a3a" stroke-width="1" stroke-dasharray="5 5" stroke-dashoffset="0" fill="none"/>
</svg>
<div class="t" style="left:1446.5px;width:300px;text-align:right;top:109.8px;font-size:13.6px;color:#111;font-weight:normal;-webkit-text-stroke:0.35px currentColor;text-shadow:0 0 1px rgba(255,255,255,.9)">20 V</div>
<div class="t" style="left:1446.5px;width:300px;text-align:right;top:132.3px;font-size:13.6px;color:#111;font-weight:normal;-webkit-text-stroke:0.35px currentColor;text-shadow:0 0 1px rgba(255,255,255,.9)">10 V</div>
<div class="t" style="left:1446.5px;width:300px;text-align:right;top:155.5px;font-size:13.6px;color:#111;font-weight:normal;-webkit-text-stroke:0.35px currentColor;text-shadow:0 0 1px rgba(255,255,255,.9)">0 V</div>
<div class="t" style="left:1446.5px;width:300px;text-align:right;top:183.5px;font-size:13.6px;color:#0ea4b4;font-weight:normal;-webkit-text-stroke:0.35px currentColor;text-shadow:0 0 1px rgba(255,255,255,.9)">1.25 V</div>
<div class="t" style="left:1446.5px;width:300px;text-align:right;top:206.5px;font-size:13.6px;color:#0ea4b4;font-weight:normal;-webkit-text-stroke:0.35px currentColor;text-shadow:0 0 1px rgba(255,255,255,.9)">750 mV</div>
<div class="t" style="left:1446.5px;width:300px;text-align:right;top:229.8px;font-size:13.6px;color:#0ea4b4;font-weight:normal;-webkit-text-stroke:0.35px currentColor;text-shadow:0 0 1px rgba(255,255,255,.9)">250 mV</div>
<div class="t" style="left:1446.5px;width:300px;text-align:right;top:252.3px;font-size:13.6px;color:#0ea4b4;font-weight:normal;-webkit-text-stroke:0.35px currentColor;text-shadow:0 0 1px rgba(255,255,255,.9)">-250 mV</div>
<div class="t" style="left:1446.5px;width:300px;text-align:right;top:274.8px;font-size:13.6px;color:#0ea4b4;font-weight:normal;-webkit-text-stroke:0.35px currentColor;text-shadow:0 0 1px rgba(255,255,255,.9)">-750 mV</div>
<div class="t" style="left:1446.5px;width:300px;text-align:right;top:297.3px;font-size:13.6px;color:#b8243f;font-weight:normal;-webkit-text-stroke:0.35px currentColor;text-shadow:0 0 1px rgba(255,255,255,.9)">1.80 V</div>
<div class="t" style="left:1446.5px;width:300px;text-align:right;top:319.8px;font-size:13.6px;color:#b8243f;font-weight:normal;-webkit-text-stroke:0.35px currentColor;text-shadow:0 0 1px rgba(255,255,255,.9)">900 mV</div>
<div class="t" style="left:1446.5px;width:300px;text-align:right;top:343.0px;font-size:13.6px;color:#b8243f;font-weight:normal;-webkit-text-stroke:0.35px currentColor;text-shadow:0 0 1px rgba(255,255,255,.9)">0 V</div>
<div class="t" style="left:1446.5px;width:300px;text-align:right;top:366.0px;font-size:13.6px;color:#b8243f;font-weight:normal;-webkit-text-stroke:0.35px currentColor;text-shadow:0 0 1px rgba(255,255,255,.9)">-900 mV</div>
<div class="t" style="left:1446.5px;width:300px;text-align:right;top:389.0px;font-size:13.6px;color:#b8243f;font-weight:normal;-webkit-text-stroke:0.35px currentColor;text-shadow:0 0 1px rgba(255,255,255,.9)">-1.80 V</div>
<div class="t" style="left:1446.5px;width:300px;text-align:right;top:414.0px;font-size:13.6px;color:#4e9014;font-weight:normal;-webkit-text-stroke:0.35px currentColor;text-shadow:0 0 1px rgba(255,255,255,.9)">1 V</div>
<div class="t" style="left:1446.5px;width:300px;text-align:right;top:437.3px;font-size:13.6px;color:#4e9014;font-weight:normal;-webkit-text-stroke:0.35px currentColor;text-shadow:0 0 1px rgba(255,255,255,.9)">600 mV</div>
<div class="t" style="left:1446.5px;width:300px;text-align:right;top:459.8px;font-size:13.6px;color:#4e9014;font-weight:normal;-webkit-text-stroke:0.35px currentColor;text-shadow:0 0 1px rgba(255,255,255,.9)">200 mV</div>
<div class="t" style="left:1446.5px;width:300px;text-align:right;top:483.0px;font-size:13.6px;color:#4e9014;font-weight:normal;-webkit-text-stroke:0.35px currentColor;text-shadow:0 0 1px rgba(255,255,255,.9)">-200 mV</div>
<div class="t" style="left:1446.5px;width:300px;text-align:right;top:506.0px;font-size:13.6px;color:#4e9014;font-weight:normal;-webkit-text-stroke:0.35px currentColor;text-shadow:0 0 1px rgba(255,255,255,.9)">-600 mV</div>
<div class="t" style="left:1446.5px;width:300px;text-align:right;top:529.0px;font-size:13.6px;color:#de7e18;font-weight:normal;-webkit-text-stroke:0.35px currentColor;text-shadow:0 0 1px rgba(255,255,255,.9)">4 V</div>
<div class="t" style="left:1446.5px;width:300px;text-align:right;top:554.0px;font-size:13.6px;color:#de7e18;font-weight:normal;-webkit-text-stroke:0.35px currentColor;text-shadow:0 0 1px rgba(255,255,255,.9)">2 V</div>
<div class="t" style="left:1446.5px;width:300px;text-align:right;top:577.3px;font-size:13.6px;color:#de7e18;font-weight:normal;-webkit-text-stroke:0.35px currentColor;text-shadow:0 0 1px rgba(255,255,255,.9)">0 V</div>
<div class="t" style="left:1446.5px;width:300px;text-align:right;top:600.3px;font-size:13.6px;color:#de7e18;font-weight:normal;-webkit-text-stroke:0.35px currentColor;text-shadow:0 0 1px rgba(255,255,255,.9)">-2 V</div>
<div class="t" style="left:1446.5px;width:300px;text-align:right;top:623.0px;font-size:13.6px;color:#de7e18;font-weight:normal;-webkit-text-stroke:0.35px currentColor;text-shadow:0 0 1px rgba(255,255,255,.9)">-4 V</div>
<div class="t" style="left:1446.5px;width:300px;text-align:right;top:648.0px;font-size:13.6px;color:#1c1c9c;font-weight:normal;-webkit-text-stroke:0.35px currentColor;text-shadow:0 0 1px rgba(255,255,255,.9)">6 V</div>
<div class="t" style="left:1446.5px;width:300px;text-align:right;top:671.0px;font-size:13.6px;color:#1c1c9c;font-weight:normal;-webkit-text-stroke:0.35px currentColor;text-shadow:0 0 1px rgba(255,255,255,.9)">4.50 V</div>
<div class="t" style="left:1446.5px;width:300px;text-align:right;top:694.0px;font-size:13.6px;color:#1c1c9c;font-weight:normal;-webkit-text-stroke:0.35px currentColor;text-shadow:0 0 1px rgba(255,255,255,.9)">3 V</div>
<div class="t" style="left:1446.5px;width:300px;text-align:right;top:717.3px;font-size:13.6px;color:#1c1c9c;font-weight:normal;-webkit-text-stroke:0.35px currentColor;text-shadow:0 0 1px rgba(255,255,255,.9)">1.50 V</div>
<div class="t" style="left:1446.5px;width:300px;text-align:right;top:740.5px;font-size:13.6px;color:#1c1c9c;font-weight:normal;-webkit-text-stroke:0.35px currentColor;text-shadow:0 0 1px rgba(255,255,255,.9)">0 V</div>
<div class="t" style="left:1446.5px;width:300px;text-align:right;top:764.8px;font-size:13.6px;color:#c87414;font-weight:normal;-webkit-text-stroke:0.35px currentColor;text-shadow:0 0 1px rgba(255,255,255,.9)">527.390 mT</div>
<div class="t" style="left:1446.5px;width:300px;text-align:right;top:788.0px;font-size:13.6px;color:#c87414;font-weight:normal;-webkit-text-stroke:0.35px currentColor;text-shadow:0 0 1px rgba(255,255,255,.9)">395.542 mT</div>
<div class="t" style="left:1446.5px;width:300px;text-align:right;top:811.0px;font-size:13.6px;color:#c87414;font-weight:normal;-webkit-text-stroke:0.35px currentColor;text-shadow:0 0 1px rgba(255,255,255,.9)">263.695 mT</div>
<div class="t" style="left:1446.5px;width:300px;text-align:right;top:834.0px;font-size:13.6px;color:#c87414;font-weight:normal;-webkit-text-stroke:0.35px currentColor;text-shadow:0 0 1px rgba(255,255,255,.9)">131.847 mT</div>
<div class="t" style="left:1446.5px;width:300px;text-align:right;top:857.3px;font-size:13.6px;color:#c87414;font-weight:normal;-webkit-text-stroke:0.35px currentColor;text-shadow:0 0 1px rgba(255,255,255,.9)">0 T</div>
<div class="t" style="left:1446.5px;width:300px;text-align:right;top:879.0px;font-size:13.6px;color:#3c1a5a;font-weight:normal;-webkit-text-stroke:0.35px currentColor;text-shadow:0 0 1px rgba(255,255,255,.9)">855.475 A</div>
<div class="t" style="left:1446.5px;width:300px;text-align:right;top:902.3px;font-size:13.6px;color:#3c1a5a;font-weight:normal;-webkit-text-stroke:0.35px currentColor;text-shadow:0 0 1px rgba(255,255,255,.9)">513.285 A</div>
<div class="t" style="left:1446.5px;width:300px;text-align:right;top:926.0px;font-size:13.6px;color:#3c1a5a;font-weight:normal;-webkit-text-stroke:0.35px currentColor;text-shadow:0 0 1px rgba(255,255,255,.9)">171.095 A</div>
<div class="t" style="left:1446.5px;width:300px;text-align:right;top:949.0px;font-size:13.6px;color:#3c1a5a;font-weight:normal;-webkit-text-stroke:0.35px currentColor;text-shadow:0 0 1px rgba(255,255,255,.9)">-171.095 A</div>
<div class="t" style="left:1446.5px;width:300px;text-align:right;top:972.3px;font-size:13.6px;color:#3c1a5a;font-weight:normal;-webkit-text-stroke:0.35px currentColor;text-shadow:0 0 1px rgba(255,255,255,.9)">-513.285 A</div>
<div class="t" style="left:1446.5px;width:300px;text-align:right;top:86.5px;font-size:13.6px;color:#111;font-weight:normal;-webkit-text-stroke:0.35px currentColor;text-shadow:0 0 1px rgba(255,255,255,.9)">30 V</div>
<div class="t" style="left:15.5px;width:80px;text-align:center;top:741.0px;font-size:13.6px;color:#222;font-weight:normal;-webkit-text-stroke:0.35px currentColor"><span style="background:#fff;padding:1px 2px">0 s</span></div>
<div class="t" style="left:190.5px;width:80px;text-align:center;top:741.0px;font-size:13.6px;color:#222;font-weight:normal;-webkit-text-stroke:0.35px currentColor"><span style="background:#fff;padding:1px 2px">4 ms</span></div>
<div class="t" style="left:365.5px;width:80px;text-align:center;top:741.0px;font-size:13.6px;color:#222;font-weight:normal;-webkit-text-stroke:0.35px currentColor"><span style="background:#fff;padding:1px 2px">8 ms</span></div>
<div class="t" style="left:540.5px;width:80px;text-align:center;top:741.0px;font-size:13.6px;color:#222;font-weight:normal;-webkit-text-stroke:0.35px currentColor"><span style="background:#fff;padding:1px 2px">12 ms</span></div>
<div class="t" style="left:715.5px;width:80px;text-align:center;top:741.0px;font-size:13.6px;color:#222;font-weight:normal;-webkit-text-stroke:0.35px currentColor"><span style="background:#fff;padding:1px 2px">16 ms</span></div>
<div class="t" style="left:889.5px;width:80px;text-align:center;top:741.0px;font-size:13.6px;color:#222;font-weight:normal;-webkit-text-stroke:0.35px currentColor"><span style="background:#fff;padding:1px 2px">20 ms</span></div>
<div class="t" style="left:1064.5px;width:80px;text-align:center;top:741.0px;font-size:13.6px;color:#222;font-weight:normal;-webkit-text-stroke:0.35px currentColor"><span style="background:#fff;padding:1px 2px">24 ms</span></div>
<div class="t" style="left:1239.5px;width:80px;text-align:center;top:741.0px;font-size:13.6px;color:#222;font-weight:normal;-webkit-text-stroke:0.35px currentColor"><span style="background:#fff;padding:1px 2px">28 ms</span></div>
<div class="t" style="left:1414.5px;width:80px;text-align:center;top:741.0px;font-size:13.6px;color:#222;font-weight:normal;-webkit-text-stroke:0.35px currentColor"><span style="background:#fff;padding:1px 2px">32 ms</span></div>
<div class="t" style="left:1589.5px;width:80px;text-align:center;top:741.0px;font-size:13.6px;color:#222;font-weight:normal;-webkit-text-stroke:0.35px currentColor"><span style="background:#fff;padding:1px 2px">36 ms</span></div>
<svg style="position:absolute;left:0;top:0" width="100" height="80"><path d="M45 58 L65 58 L55.5 68 Z" fill="#f68b1f"/></svg>
<svg style="position:absolute;left:5px;top:101px" width="82" height="26.5"><path d="M4 1 H73 L79 13.25 L73 25.5 H4 Q1 25.5 1 22.5 V4 Q1 1 4 1 Z" fill="#e8e8e8" stroke="#222" stroke-width="2"/><path d="M4 1 H28 V25.5 H4 Q1 25.5 1 22.5 V4 Q1 1 4 1 Z" fill="#e8e8e8" stroke="#222" stroke-width="2"/></svg>
<div class="t" style="left:4.5px;width:30px;text-align:center;top:108.6px;font-size:11.8px;color:#222;font-weight:normal;letter-spacing:0.5px;-webkit-text-stroke:0.3px currentColor">C 1</div>
<div class="t" style="left:32.5px;width:50px;text-align:center;top:108.4px;font-size:12px;color:#222;font-weight:normal;-webkit-text-stroke:0.25px currentColor">20 V</div>
<svg style="position:absolute;left:5px;top:219px" width="82" height="26.5"><path d="M4 1 H73 L79 13.25 L73 25.5 H4 Q1 25.5 1 22.5 V4 Q1 1 4 1 Z" fill="#e6f8f9" stroke="#22c4d0" stroke-width="2"/><path d="M4 1 H28 V25.5 H4 Q1 25.5 1 22.5 V4 Q1 1 4 1 Z" fill="#e6f8f9" stroke="#22c4d0" stroke-width="2"/></svg>
<div class="t" style="left:4.5px;width:30px;text-align:center;top:226.6px;font-size:11.8px;color:#111;font-weight:normal;letter-spacing:0.5px;-webkit-text-stroke:0.3px currentColor">C 2</div>
<div class="t" style="left:32.5px;width:50px;text-align:center;top:226.4px;font-size:12px;color:#111;font-weight:normal;-webkit-text-stroke:0.25px currentColor">300 mV</div>
<svg style="position:absolute;left:5px;top:336px" width="42" height="26.5"><path d="M4 1 H30 L37 13.25 L30 25.5 H4 Q1 25.5 1 22.5 V4 Q1 1 4 1 Z" fill="#fde6ea" stroke="#f08a9c" stroke-width="1.6"/></svg>
<div class="t" style="left:8.0px;width:30px;text-align:center;top:343.6px;font-size:11.8px;color:#e8506a;font-weight:normal;letter-spacing:0.5px;-webkit-text-stroke:0.3px currentColor">C 3</div>
<svg style="position:absolute;left:5px;top:453px" width="82" height="26.5"><path d="M4 1 H73 L79 13.25 L73 25.5 H4 Q1 25.5 1 22.5 V4 Q1 1 4 1 Z" fill="#eff8e6" stroke="#86cc44" stroke-width="2"/><path d="M4 1 H28 V25.5 H4 Q1 25.5 1 22.5 V4 Q1 1 4 1 Z" fill="#eff8e6" stroke="#86cc44" stroke-width="2"/></svg>
<div class="t" style="left:4.5px;width:30px;text-align:center;top:460.6px;font-size:11.8px;color:#111;font-weight:normal;letter-spacing:0.5px;-webkit-text-stroke:0.3px currentColor">C 4</div>
<div class="t" style="left:32.5px;width:50px;text-align:center;top:460.4px;font-size:12px;color:#111;font-weight:normal;-webkit-text-stroke:0.25px currentColor">200 mV</div>
<svg style="position:absolute;left:5px;top:570px" width="42" height="26.5"><path d="M4 1 H30 L37 13.25 L30 25.5 H4 Q1 25.5 1 22.5 V4 Q1 1 4 1 Z" fill="#fff0de" stroke="#f8c07c" stroke-width="1.6"/></svg>
<div class="t" style="left:8.0px;width:30px;text-align:center;top:577.6px;font-size:11.8px;color:#222;font-weight:normal;letter-spacing:0.5px;-webkit-text-stroke:0.3px currentColor">C 5</div>
<svg style="position:absolute;left:5px;top:686.5px" width="82" height="26.5"><path d="M4 1 H73 L79 13.25 L73 25.5 H4 Q1 25.5 1 22.5 V4 Q1 1 4 1 Z" fill="#e8e8f6" stroke="#111" stroke-width="2"/><path d="M4 1 H28 V25.5 H4 Q1 25.5 1 22.5 V4 Q1 1 4 1 Z" fill="#2828c0" stroke="#111" stroke-width="2"/></svg>
<div class="t" style="left:4.5px;width:30px;text-align:center;top:694.1px;font-size:11.8px;color:#fff;font-weight:normal;letter-spacing:0.5px;-webkit-text-stroke:0.3px currentColor">C 6</div>
<div class="t" style="left:32.5px;width:50px;text-align:center;top:693.9px;font-size:12px;color:#3030b0;font-weight:normal;-webkit-text-stroke:0.25px currentColor">3 V</div>
<svg style="position:absolute;left:5px;top:850px" width="42" height="26.5"><path d="M4 1 H30 L37 13.25 L30 25.5 H4 Q1 25.5 1 22.5 V4 Q1 1 4 1 Z" fill="#fff0de" stroke="#f8c07c" stroke-width="1.6"/></svg>
<div class="t" style="left:8.0px;width:30px;text-align:center;top:857.6px;font-size:11.8px;color:#222;font-weight:normal;letter-spacing:0.5px;-webkit-text-stroke:0.3px currentColor">M 1</div>
<svg style="position:absolute;left:5px;top:929.5px" width="42" height="26.5"><path d="M4 1 H30 L37 13.25 L30 25.5 H4 Q1 25.5 1 22.5 V4 Q1 1 4 1 Z" fill="#f0e8f6" stroke="#9c7cc0" stroke-width="1.6"/></svg>
<div class="t" style="left:8.0px;width:30px;text-align:center;top:937.1px;font-size:11.8px;color:#6a4a9a;font-weight:normal;letter-spacing:0.5px;-webkit-text-stroke:0.3px currentColor">M 2</div>
<svg style="position:absolute;left:40px;top:640px" width="30" height="35"><path d="M5 3 H25 V24 H18 L15 30 L12 24 H5 Z" fill="#f68b1f"/><rect x="7.5" y="5.5" width="15" height="16" fill="#000"/><path d="M10 8 H20 V10.5 H16.3 V19 H13.7 V10.5 H10 Z" fill="#f68b1f"/></svg>
<svg style="position:absolute;left:1700px;top:60px" width="52" height="45"><path d="M11 4.5 Q9 4.5 10.5 6 L43 38.5 Q44.5 40 44.5 38 V7 Q44.5 4.5 42 4.5 Z" fill="#484848" stroke="#111" stroke-width="1.2"/><circle cx="37.2" cy="11.4" r="4" fill="none" stroke="#9a9a9a" stroke-width="1.6"/><path d="M34.2 14.4 L28.2 20" stroke="#9a9a9a" stroke-width="2" stroke-linecap="round"/></svg>
<svg style="position:absolute;left:1725px;top:688px" width="28" height="26"><path d="M6 12.5 L15 3 L15 9.5 H26 V14.5 H15 V22 Z" fill="#2424b4"/></svg>
<div style="position:absolute;left:0px;top:993px;width:1754px;height:3px;background:linear-gradient(#e4e4e4,#c8c8c8)"></div>
<div style="position:absolute;left:0px;top:996px;width:1920px;height:84px;background:#2b2b2b"></div>
<div style="position:absolute;left:3px;top:984px;width:90px;height:95px;background:#c8c8c8;border-radius:5px;"></div>
<div style="position:absolute;left:3px;top:984px;width:90px;height:19px;background:#1e1e1e;border-radius:5px 5px 0 0"></div>
<div style="position:absolute;left:3px;top:1003px;width:90px;height:2px;background:#b0b0b0"></div>
<div style="position:absolute;left:3px;top:1005px;width:90px;height:17px;background:#fe0000"></div>
<div class="t" style="left:8.5px;top:986.4px;font-size:14px;color:#e8e43c;font-weight:normal;-webkit-text-stroke:0.25px currentColor">Ch 1</div>
<svg style="position:absolute;left:3.5px;top:1005px" width="17" height="17"><path d="M8.2 1.5 L15.8 15.5 H0.8 Z" fill="#f4ec10" stroke="#3c3c6a" stroke-width="1"/><rect x="7.6" y="6" width="1.4" height="6.5" fill="#a0a040"/></svg>
<div class="t" style="left:20.0px;top:1005.2px;font-size:15.3px;color:#ffffff;font-weight:normal;-webkit-text-stroke:0.2px currentColor">Clipping</div>
<div class="t" style="left:8.5px;top:1024.5px;font-size:14.5px;color:#1a1a1a;font-weight:normal;">5 V/div</div>
<div class="t" style="left:8.5px;top:1043.2px;font-size:14.5px;color:#1a1a1a;font-weight:normal;">1 M&Omega;</div>
<div class="t" style="left:8.5px;top:1062.5px;font-size:14.5px;color:#1a1a1a;font-weight:normal;">200 kHz</div>
<div class="t" style="left:75.0px;top:1061.5px;font-size:10px;color:#1a1a1a;font-weight:bold;">B</div>
<div class="t" style="left:81.0px;top:1063.5px;font-size:10px;color:#1a1a1a;font-weight:bold;">w</div>
<div style="position:absolute;left:98px;top:984px;width:90px;height:95px;background:#c8c8c8;border-radius:5px;"></div>
<div style="position:absolute;left:98px;top:984px;width:90px;height:19px;background:#1d3f42;border-radius:5px 5px 0 0"></div>
<div style="position:absolute;left:98px;top:1003px;width:90px;height:2px;background:#b0b0b0"></div>
<div style="position:absolute;left:98px;top:1005px;width:90px;height:17px;background:#fe0000"></div>
<div class="t" style="left:103.5px;top:986.4px;font-size:14px;color:#2ac8d4;font-weight:normal;-webkit-text-stroke:0.25px currentColor">Ch 2</div>
<svg style="position:absolute;left:98.5px;top:1005px" width="17" height="17"><path d="M8.2 1.5 L15.8 15.5 H0.8 Z" fill="#f4ec10" stroke="#3c3c6a" stroke-width="1"/><rect x="7.6" y="6" width="1.4" height="6.5" fill="#a0a040"/></svg>
<div class="t" style="left:115.0px;top:1005.2px;font-size:15.3px;color:#ffffff;font-weight:normal;-webkit-text-stroke:0.2px currentColor">Clipping</div>
<div class="t" style="left:103.5px;top:1024.5px;font-size:14.5px;color:#1a1a1a;font-weight:normal;">250 mV/div</div>
<div class="t" style="left:103.5px;top:1043.2px;font-size:14.5px;color:#1a1a1a;font-weight:normal;">1 M&Omega;</div>
<div class="t" style="left:103.5px;top:1062.5px;font-size:14.5px;color:#1a1a1a;font-weight:normal;">200 kHz</div>
<div class="t" style="left:170.0px;top:1061.5px;font-size:10px;color:#1a1a1a;font-weight:bold;">B</div>
<div class="t" style="left:176.0px;top:1063.5px;font-size:10px;color:#1a1a1a;font-weight:bold;">w</div>
<div style="position:absolute;left:193px;top:984px;width:90px;height:95px;background:#c8c8c8;border-radius:5px;"></div>
<div style="position:absolute;left:193px;top:984px;width:90px;height:19px;background:#45262b;border-radius:5px 5px 0 0"></div>
<div style="position:absolute;left:193px;top:1003px;width:90px;height:2px;background:#b0b0b0"></div>
<div style="position:absolute;left:193px;top:1005px;width:90px;height:17px;background:#fe0000"></div>
<div class="t" style="left:198.5px;top:986.4px;font-size:14px;color:#f4f4f4;font-weight:normal;-webkit-text-stroke:0.25px currentColor">Ch 3</div>
<svg style="position:absolute;left:193.5px;top:1005px" width="17" height="17"><path d="M8.2 1.5 L15.8 15.5 H0.8 Z" fill="#f4ec10" stroke="#3c3c6a" stroke-width="1"/><rect x="7.6" y="6" width="1.4" height="6.5" fill="#a0a040"/></svg>
<div class="t" style="left:210.0px;top:1005.2px;font-size:15.3px;color:#ffffff;font-weight:normal;-webkit-text-stroke:0.2px currentColor">Clipping</div>
<div class="t" style="left:198.5px;top:1024.5px;font-size:14.5px;color:#1a1a1a;font-weight:normal;">450 mV/div</div>
<div class="t" style="left:198.5px;top:1043.2px;font-size:14.5px;color:#1a1a1a;font-weight:normal;">1 M&Omega;</div>
<div class="t" style="left:198.5px;top:1062.5px;font-size:14.5px;color:#1a1a1a;font-weight:normal;">200 kHz</div>
<div class="t" style="left:265.0px;top:1061.5px;font-size:10px;color:#1a1a1a;font-weight:bold;">B</div>
<div class="t" style="left:271.0px;top:1063.5px;font-size:10px;color:#1a1a1a;font-weight:bold;">w</div>
<div style="position:absolute;left:288px;top:1003px;width:90px;height:76px;background:#c8c8c8;border-radius:5px;"></div>
<div style="position:absolute;left:288px;top:1003px;width:90px;height:19px;background:#394327;border-radius:5px 5px 0 0"></div>
<div style="position:absolute;left:288px;top:1022px;width:90px;height:2px;background:#b0b0b0"></div>
<div class="t" style="left:293.5px;top:1005.3px;font-size:14px;color:#90d23a;font-weight:normal;-webkit-text-stroke:0.25px currentColor">Ch 4</div>
<div class="t" style="left:293.5px;top:1024.5px;font-size:14.5px;color:#1a1a1a;font-weight:normal;">200 mV/div</div>
<div class="t" style="left:293.5px;top:1043.2px;font-size:14.5px;color:#1a1a1a;font-weight:normal;">1 M&Omega;</div>
<div class="t" style="left:293.5px;top:1062.5px;font-size:14.5px;color:#1a1a1a;font-weight:normal;">200 kHz</div>
<div class="t" style="left:360.0px;top:1061.5px;font-size:10px;color:#1a1a1a;font-weight:bold;">B</div>
<div class="t" style="left:366.0px;top:1063.5px;font-size:10px;color:#1a1a1a;font-weight:bold;">w</div>
<div style="position:absolute;left:383px;top:1003px;width:90px;height:76px;background:#c8c8c8;border-radius:5px;"></div>
<div style="position:absolute;left:383px;top:1003px;width:90px;height:19px;background:#4a3521;border-radius:5px 5px 0 0"></div>
<div style="position:absolute;left:383px;top:1022px;width:90px;height:2px;background:#b0b0b0"></div>
<div class="t" style="left:388.5px;top:1005.3px;font-size:14px;color:#f4a040;font-weight:normal;-webkit-text-stroke:0.25px currentColor">Ch 5</div>
<div class="t" style="left:388.5px;top:1024.5px;font-size:14.5px;color:#1a1a1a;font-weight:normal;">1 V/div</div>
<div class="t" style="left:388.5px;top:1043.2px;font-size:14.5px;color:#1a1a1a;font-weight:normal;">1 M&Omega;</div>
<div class="t" style="left:388.5px;top:1062.5px;font-size:14.5px;color:#1a1a1a;font-weight:normal;">200 kHz</div>
<div class="t" style="left:455.0px;top:1061.5px;font-size:10px;color:#1a1a1a;font-weight:bold;">B</div>
<div class="t" style="left:461.0px;top:1063.5px;font-size:10px;color:#1a1a1a;font-weight:bold;">w</div>
<div style="position:absolute;left:478px;top:984px;width:90px;height:95px;background:#c8c8c8;border-radius:5px;"></div>
<div style="position:absolute;left:478px;top:984px;width:90px;height:19px;background:#2a2ac4;border-radius:5px 5px 0 0"></div>
<div style="position:absolute;left:478px;top:1003px;width:90px;height:2px;background:#b0b0b0"></div>
<div style="position:absolute;left:478px;top:1005px;width:90px;height:17px;background:#fe0000"></div>
<div class="t" style="left:483.5px;top:986.4px;font-size:14px;color:#f4f4f4;font-weight:normal;-webkit-text-stroke:0.25px currentColor">Ch 6</div>
<svg style="position:absolute;left:478.5px;top:1005px" width="17" height="17"><path d="M8.2 1.5 L15.8 15.5 H0.8 Z" fill="#f4ec10" stroke="#3c3c6a" stroke-width="1"/><rect x="7.6" y="6" width="1.4" height="6.5" fill="#a0a040"/></svg>
<div class="t" style="left:495.0px;top:1005.2px;font-size:15.3px;color:#ffffff;font-weight:normal;-webkit-text-stroke:0.2px currentColor">Clipping</div>
<div class="t" style="left:483.5px;top:1024.5px;font-size:14.5px;color:#1a1a1a;font-weight:normal;">750 mV/div</div>
<div class="t" style="left:483.5px;top:1043.2px;font-size:14.5px;color:#1a1a1a;font-weight:normal;">1 M&Omega;</div>
<div class="t" style="left:483.5px;top:1062.5px;font-size:14.5px;color:#1a1a1a;font-weight:normal;">200 kHz</div>
<div class="t" style="left:550.0px;top:1061.5px;font-size:10px;color:#1a1a1a;font-weight:bold;">B</div>
<div class="t" style="left:556.0px;top:1063.5px;font-size:10px;color:#1a1a1a;font-weight:bold;">w</div>
<div style="position:absolute;left:573px;top:984px;width:90px;height:95px;background:#c8c8c8;border-radius:5px;"></div>
<div style="position:absolute;left:573px;top:984px;width:90px;height:19px;background:#4a3521;border-radius:5px 5px 0 0"></div>
<div style="position:absolute;left:573px;top:1003px;width:90px;height:2px;background:#b0b0b0"></div>
<div style="position:absolute;left:573px;top:1005px;width:90px;height:17px;background:#fe0000"></div>
<div class="t" style="left:578.5px;top:985.2px;font-size:15.5px;color:#f4a040;font-weight:normal;-webkit-text-stroke:0.25px currentColor">Math 1</div>
<svg style="position:absolute;left:573.5px;top:1005px" width="17" height="17"><path d="M8.2 1.5 L15.8 15.5 H0.8 Z" fill="#f4ec10" stroke="#3c3c6a" stroke-width="1"/><rect x="7.6" y="6" width="1.4" height="6.5" fill="#a0a040"/></svg>
<div class="t" style="left:590.0px;top:1005.2px;font-size:15.3px;color:#ffffff;font-weight:normal;-webkit-text-stroke:0.2px currentColor">Empty i...</div>
<div class="t" style="left:578.0px;top:1024.3px;font-size:14.8px;color:#111;font-weight:bold;letter-spacing:0.1px">65.9 mT/div</div>
<div class="t" style="left:578.5px;top:1043.4px;font-size:14.3px;color:#1a1a1a;font-weight:normal;">Intg(Ch2)...</div>
<div style="position:absolute;left:668px;top:984px;width:90px;height:95px;background:#c8c8c8;border-radius:5px;"></div>
<div style="position:absolute;left:668px;top:984px;width:90px;height:19px;background:#2e2233;border-radius:5px 5px 0 0"></div>
<div style="position:absolute;left:668px;top:1003px;width:90px;height:2px;background:#b0b0b0"></div>
<div style="position:absolute;left:668px;top:1005px;width:90px;height:17px;background:#fe0000"></div>
<div class="t" style="left:673.5px;top:985.2px;font-size:15.5px;color:#f4f4f4;font-weight:normal;-webkit-text-stroke:0.25px currentColor">Math 2</div>
<svg style="position:absolute;left:668.5px;top:1005px" width="17" height="17"><path d="M8.2 1.5 L15.8 15.5 H0.8 Z" fill="#f4ec10" stroke="#3c3c6a" stroke-width="1"/><rect x="7.6" y="6" width="1.4" height="6.5" fill="#a0a040"/></svg>
<div class="t" style="left:685.0px;top:1005.2px;font-size:15.3px;color:#ffffff;font-weight:normal;-webkit-text-stroke:0.2px currentColor">Empty i...</div>
<div class="t" style="left:673.0px;top:1024.3px;font-size:14.8px;color:#111;font-weight:bold;letter-spacing:0.1px">171.09 A/...</div>
<div class="t" style="left:673.5px;top:1043.4px;font-size:14.3px;color:#1a1a1a;font-weight:normal;">-Intg(Ch3...</div>
<div style="position:absolute;left:1118px;top:1000px;width:1px;height:80px;background:#555"></div>
<div style="position:absolute;left:1269px;top:1000px;width:1px;height:80px;background:#555"></div>
<div style="position:absolute;left:1811px;top:1000px;width:1px;height:80px;background:#555"></div>
<div style="position:absolute;left:1129px;top:999px;width:40px;height:79px;border:1px solid #6e6459;border-radius:7px;box-sizing:border-box;background:linear-gradient(#444,#2c2c2c 30%,#262626 85%,#1c1c1c)"></div>
<div style="position:absolute;left:1133px;top:1007px;width:32px;height:2px;background:#c0282c"></div>
<div class="t" style="left:1119.0px;width:60px;text-align:center;top:1020.1px;font-size:15px;color:#ececec;font-weight:normal;">Add</div>
<div class="t" style="left:1119.0px;width:60px;text-align:center;top:1036.3px;font-size:15px;color:#ececec;font-weight:normal;">New</div>
<div class="t" style="left:1119.0px;width:60px;text-align:center;top:1052.3px;font-size:15px;color:#ececec;font-weight:normal;">Math</div>
<div style="position:absolute;left:1174px;top:999px;width:39px;height:79px;border:1px solid #6e6459;border-radius:7px;box-sizing:border-box;background:linear-gradient(#444,#2c2c2c 30%,#262626 85%,#1c1c1c)"></div>
<div style="position:absolute;left:1178px;top:1007px;width:31px;height:2px;background:#c4c4d8"></div>
<div class="t" style="left:1163.5px;width:60px;text-align:center;top:1020.1px;font-size:15px;color:#ececec;font-weight:normal;">Add</div>
<div class="t" style="left:1163.5px;width:60px;text-align:center;top:1036.3px;font-size:15px;color:#ececec;font-weight:normal;">New</div>
<div class="t" style="left:1163.5px;width:60px;text-align:center;top:1052.3px;font-size:15px;color:#ececec;font-weight:normal;">Ref</div>
<div style="position:absolute;left:1219px;top:999px;width:40px;height:79px;border:1px solid #6e6459;border-radius:7px;box-sizing:border-box;background:linear-gradient(#444,#2c2c2c 30%,#262626 85%,#1c1c1c)"></div>
<div style="position:absolute;left:1223px;top:1007px;width:32px;height:2px;background:#c058f0"></div>
<div class="t" style="left:1209.0px;width:60px;text-align:center;top:1020.1px;font-size:15px;color:#ececec;font-weight:normal;">Add</div>
<div class="t" style="left:1209.0px;width:60px;text-align:center;top:1036.3px;font-size:15px;color:#ececec;font-weight:normal;">New</div>
<div class="t" style="left:1209.0px;width:60px;text-align:center;top:1052.3px;font-size:15px;color:#ececec;font-weight:normal;">Bus</div>
<div style="position:absolute;left:1280px;top:1003px;width:199px;height:75px;background:#c8c8c8;border:1px solid #222;border-radius:5px;box-sizing:border-box"></div>
<div style="position:absolute;left:1281px;top:1004px;width:197px;height:19px;background:#5c5c5c;border-radius:4px 4px 0 0"></div>
<div style="position:absolute;left:1281px;top:1023px;width:197px;height:1px;background:#9a9a9a"></div>
<div class="t" style="left:1285.5px;top:1004.9px;font-size:15.5px;color:#eeeeee;font-weight:normal;">Horizontal</div>
<div class="t" style="left:1285.0px;top:1025.0px;font-size:14.2px;color:#1a1a1a;font-weight:normal;">4 ms/div</div>
<div class="t" style="left:1285.0px;top:1043.8px;font-size:14.2px;color:#1a1a1a;font-weight:normal;">SR: 1 MS/s</div>
<div class="t" style="left:1285.0px;top:1062.2px;font-size:14.2px;color:#1a1a1a;font-weight:normal;">RL: 40 kpts</div>
<div class="t" style="left:1391.0px;top:1025.0px;font-size:14.2px;color:#1a1a1a;font-weight:normal;">40 ms</div>
<div class="t" style="left:1391.5px;top:1043.8px;font-size:14.2px;color:#1a1a1a;font-weight:normal;">1 &micro;s/pt</div>
<svg style="position:absolute;left:1390px;top:1062px" width="12" height="16"><path d="M1 1 H11 V10.5 H7.5 L6 13.5 L4.5 10.5 H1 Z" fill="#f68b1f"/><rect x="2.5" y="2.5" width="7" height="6.5" fill="#000"/><path d="M3.8 3.5 H8.2 V4.8 H6.7 V8.5 H5.3 V4.8 H3.8 Z" fill="#f68b1f"/></svg>
<div class="t" style="left:1405.0px;top:1062.2px;font-size:14.2px;color:#1a1a1a;font-weight:normal;">3%</div>
<div style="position:absolute;left:1486px;top:1003px;width:158px;height:75px;background:#c8c8c8;border:1px solid #222;border-radius:5px;box-sizing:border-box"></div>
<div style="position:absolute;left:1487px;top:1004px;width:156px;height:19px;background:#5c5c5c;border-radius:4px 4px 0 0"></div>
<div style="position:absolute;left:1487px;top:1023px;width:156px;height:1px;background:#9a9a9a"></div>
<div class="t" style="left:1491.5px;top:1004.9px;font-size:15.5px;color:#eeeeee;font-weight:normal;">Trigger</div>
<div style="position:absolute;left:1490px;top:1025px;width:29px;height:15px;background:#2424c0;border:1px solid #111;border-radius:5px;box-sizing:border-box"></div>
<div class="t" style="left:1494.5px;width:20px;text-align:center;top:1025.1px;font-size:14px;color:#fff;font-weight:normal;">6</div>
<svg style="position:absolute;left:1528px;top:1025px" width="22" height="16"><path d="M2 12.5 H5.5 L12 3.5 H17" stroke="#3838a0" stroke-width="1.3" fill="none"/></svg>
<div class="t" style="left:1555.6px;top:1024.5px;font-size:14.5px;color:#1a1a1a;font-weight:normal;">3 V</div>
<div style="position:absolute;left:1651px;top:1003px;width:148px;height:75px;background:#c8c8c8;border:1px solid #222;border-radius:5px;box-sizing:border-box"></div>
<div style="position:absolute;left:1652px;top:1004px;width:146px;height:19px;background:#5c5c5c;border-radius:4px 4px 0 0"></div>
<div style="position:absolute;left:1652px;top:1023px;width:146px;height:1px;background:#9a9a9a"></div>
<div class="t" style="left:1656.5px;top:1004.9px;font-size:15.5px;color:#eeeeee;font-weight:normal;">Acquisition</div>
<div class="t" style="left:1655.5px;top:1024.7px;font-size:14.3px;color:#1a1a1a;font-weight:normal;">Manual,</div>
<div class="t" style="left:1736.0px;top:1024.7px;font-size:14.3px;color:#1a1a1a;font-weight:normal;">Analyze</div>
<div class="t" style="left:1655.5px;top:1043.1px;font-size:14px;color:#1a1a1a;font-weight:normal;">High Res: 16 bits</div>
<div class="t" style="left:1655.5px;top:1061.4px;font-size:14.3px;color:#1a1a1a;font-weight:normal;">Single: 1 /1</div>
<div style="position:absolute;left:1822px;top:999px;width:90px;height:36px;background:#f41c24;border:1px solid #5a5a5a;border-radius:6px;box-sizing:border-box"></div>
<div class="t" style="left:1822.0px;width:90px;text-align:center;top:1008.4px;font-size:14px;color:#ffffff;font-weight:bold;">Stopped</div>
<div style="position:absolute;left:1822px;top:1041px;width:90px;height:37px;background:#c8c8c8;border:1px solid #444;border-radius:5px;box-sizing:border-box"></div>
<div class="t" style="left:1822.0px;width:90px;text-align:center;top:1042.1px;font-size:14.5px;color:#1a1a1a;font-weight:normal;">15 May 2025</div>
<div class="t" style="left:1822.0px;width:90px;text-align:center;top:1059.3px;font-size:14.5px;color:#1a1a1a;font-weight:normal;">1:00:38 PM</div>
</body></html>
